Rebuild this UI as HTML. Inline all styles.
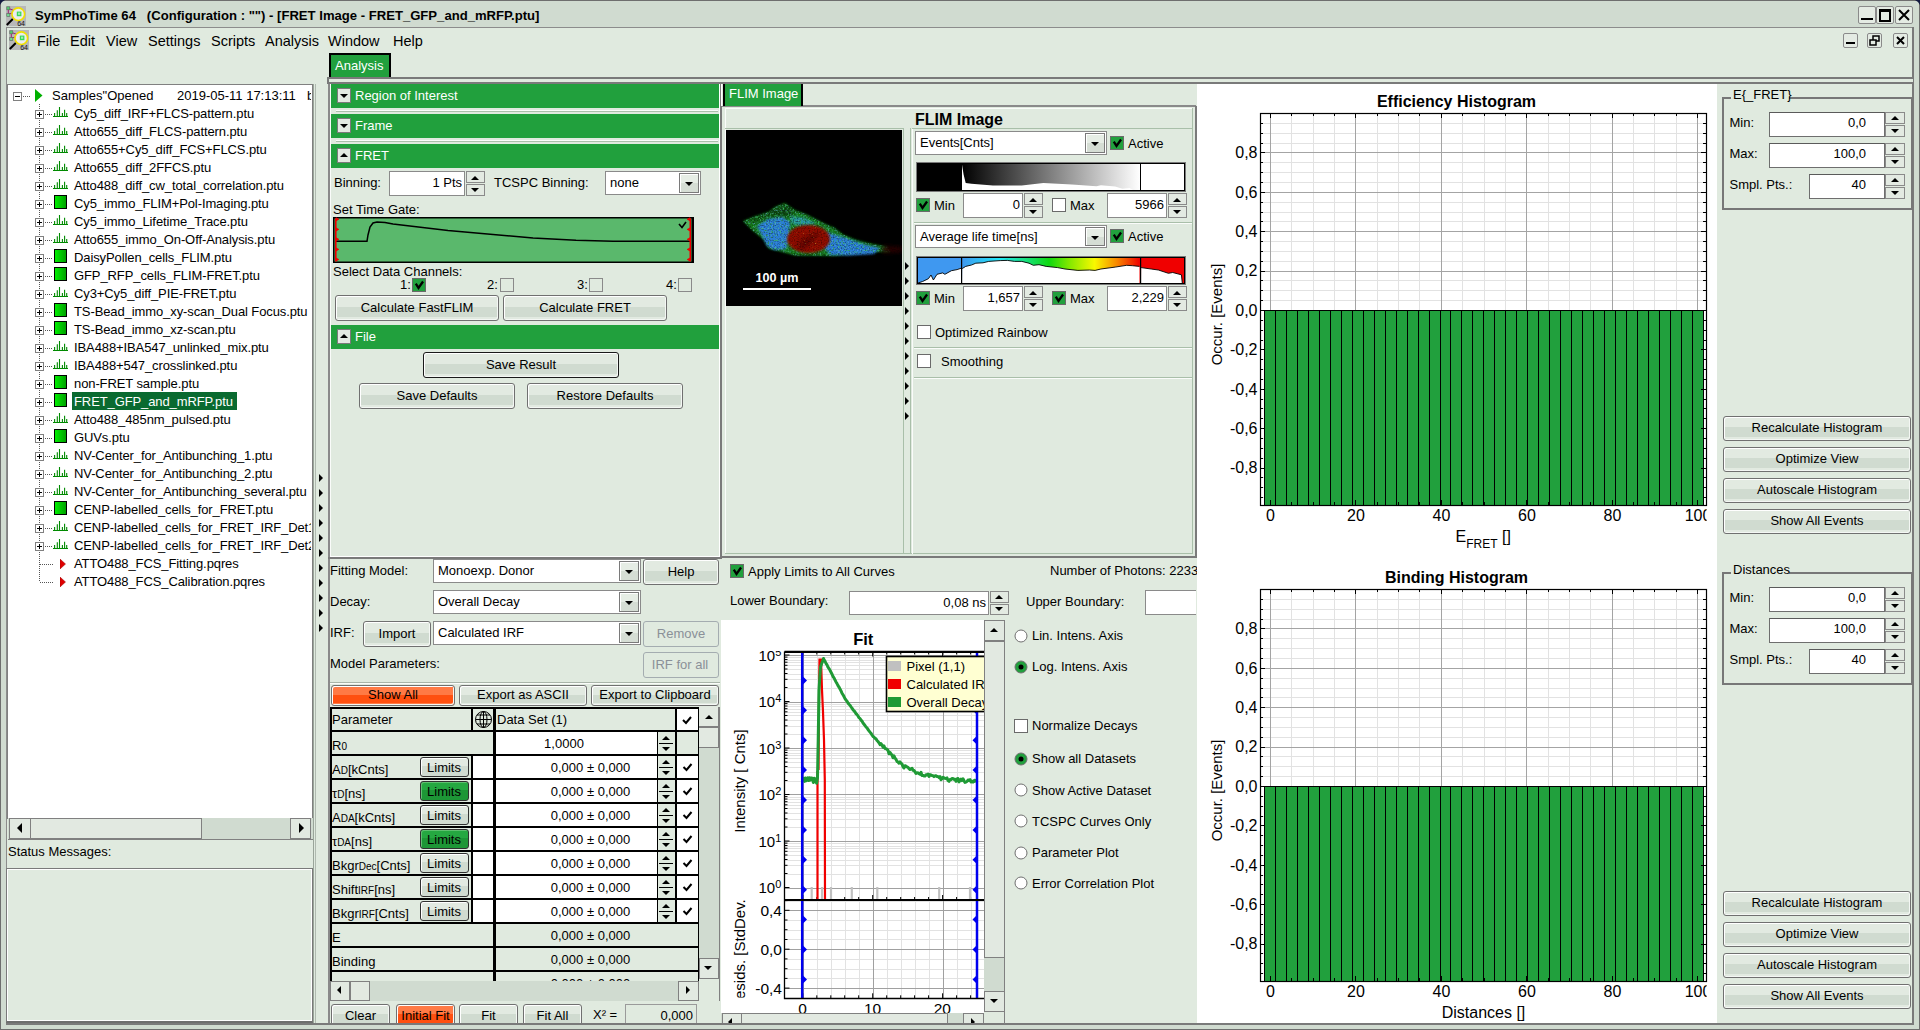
<!DOCTYPE html><html><head><meta charset="utf-8"><title>SymPhoTime 64</title><style>
html,body{margin:0;padding:0;}
body{width:1920px;height:1030px;position:relative;overflow:hidden;background:#e0eadf;font-family:"Liberation Sans",sans-serif;}
body div,body svg{position:absolute;}
.t{white-space:nowrap;line-height:normal;}
svg text{font-family:"Liberation Sans",sans-serif;}
</style></head><body>
<div style="left:0px;top:0px;width:1920px;height:1030px;background:#d0dbd0;"></div>
<div style="left:0px;top:0px;width:1920px;height:1px;background:#6e6e6e;"></div>
<div style="left:0px;top:0px;width:1px;height:1030px;background:#6e6e6e;"></div>
<div style="left:0px;top:1029px;width:1920px;height:1px;background:#6e6e6e;"></div>
<div style="left:1919px;top:0px;width:1px;height:1030px;background:#6e6e6e;"></div>
<svg style="left:0;top:0" width="6" height="6"><path d="M0 0 H5 Q1.5 1.5 0 5Z" fill="#141a40"/></svg>
<svg style="left:1914px;top:0" width="6" height="6"><path d="M6 0 H1 Q4.5 1.5 6 5Z" fill="#141a40"/></svg>
<div style="left:6px;top:27px;width:1908px;height:997px;background:#e0eadf;"></div>
<div style="left:6px;top:27px;width:1907px;height:1px;background:#8c8c8c;"></div>
<div style="left:6px;top:27px;width:1px;height:997px;background:#8c8c8c;"></div>
<div style="left:1912px;top:27px;width:2px;height:997px;background:#7a7a7a;"></div>
<div style="left:6px;top:1023px;width:1908px;height:1px;background:#7a7a7a;"></div>
<svg style="left:6px;top:6px" width="20" height="20" viewBox="0 0 20 20">
<rect x="0" y="0" width="20" height="20" fill="#b8b8b8"/>
<path d="M2.3 2.5 V8.5 M3.5 2.8 L8 4.5 M3.5 8 L6 7 M6 12 L11 9" stroke="#a02070" stroke-width="1" fill="none"/>
<rect x="0.8" y="0.8" width="3" height="3" fill="#50d070" stroke="#606060" stroke-width="0.6"/>
<rect x="0.8" y="7.6" width="3" height="3" fill="#70e090" stroke="#606060" stroke-width="0.6"/>
<line x1="0.8" y1="19" x2="6.8" y2="13" stroke="#000" stroke-width="2"/>
<circle cx="12.3" cy="8.2" r="6.3" fill="#ececec" stroke="#f0e000" stroke-width="1.6"/>
<rect x="10.8" y="5.6" width="4.6" height="4.6" fill="#38d858"/>
<rect x="12" y="6.6" width="2.2" height="2.2" fill="#a0f0b0"/>
<text x="11.2" y="19.6" font-size="7" font-family="Liberation Sans" fill="#111">64</text>
</svg>
<div class="t" style="top:7.64px;font-size:13.1px;color:#000;font-weight:bold;left:35px;white-space:pre;">SymPhoTime 64   (Configuration : &quot;&quot;) - [FRET Image - FRET_GFP_and_mRFP.ptu]</div>
<div style="left:1858px;top:6px;width:16px;height:16px;border:1px solid #8a8a8a;border-radius:2px;background:#e4ebe3"></div>
<div style="left:1861px;top:18px;width:12px;height:2px;background:#000;"></div>
<div style="left:1876px;top:6px;width:16px;height:16px;border:1px solid #8a8a8a;border-radius:2px;background:#e4ebe3"></div>
<div style="left:1879px;top:9px;width:8px;height:8px;border:2px solid #000;border-top-width:3px"></div>
<div style="left:1895px;top:6px;width:16px;height:16px;border:1px solid #8a8a8a;border-radius:2px;background:#e4ebe3"></div>
<svg style="left:1895px;top:6px" width="18" height="18"><path d="M4 4 L14 14 M14 4 L4 14" stroke="#000" stroke-width="2"/></svg>
<div style="left:1843px;top:33px;width:13px;height:13px;border:1px solid #8a8a8a;border-radius:2px;background:#e4ebe3"></div>
<div style="left:1846px;top:42px;width:9px;height:2px;background:#000;"></div>
<div style="left:1867px;top:33px;width:13px;height:13px;border:1px solid #8a8a8a;border-radius:2px;background:#e4ebe3"></div>
<svg style="left:1867px;top:33px" width="15" height="15"><rect x="6" y="3" width="6" height="5" fill="none" stroke="#000" stroke-width="1.5"/><rect x="3" y="7" width="6" height="5" fill="#e4ebe3" stroke="#000" stroke-width="1.5"/></svg>
<div style="left:1893px;top:33px;width:13px;height:13px;border:1px solid #8a8a8a;border-radius:2px;background:#e4ebe3"></div>
<svg style="left:1893px;top:33px" width="15" height="15"><path d="M4 4 L11 11 M11 4 L4 11" stroke="#000" stroke-width="2"/></svg>
<svg style="left:9px;top:30px" width="20" height="20" viewBox="0 0 20 20">
<rect x="0" y="0" width="20" height="20" fill="#b8b8b8"/>
<path d="M2.3 2.5 V8.5 M3.5 2.8 L8 4.5 M3.5 8 L6 7 M6 12 L11 9" stroke="#a02070" stroke-width="1" fill="none"/>
<rect x="0.8" y="0.8" width="3" height="3" fill="#50d070" stroke="#606060" stroke-width="0.6"/>
<rect x="0.8" y="7.6" width="3" height="3" fill="#70e090" stroke="#606060" stroke-width="0.6"/>
<line x1="0.8" y1="19" x2="6.8" y2="13" stroke="#000" stroke-width="2"/>
<circle cx="12.3" cy="8.2" r="6.3" fill="#ececec" stroke="#f0e000" stroke-width="1.6"/>
<rect x="10.8" y="5.6" width="4.6" height="4.6" fill="#38d858"/>
<rect x="12" y="6.6" width="2.2" height="2.2" fill="#a0f0b0"/>
<text x="11.2" y="19.6" font-size="7" font-family="Liberation Sans" fill="#111">64</text>
</svg>
<div class="t" style="top:32.88px;font-size:14.5px;color:#000;left:37px;">File</div>
<div class="t" style="top:32.88px;font-size:14.5px;color:#000;left:70px;">Edit</div>
<div class="t" style="top:32.88px;font-size:14.5px;color:#000;left:106px;">View</div>
<div class="t" style="top:32.88px;font-size:14.5px;color:#000;left:148px;">Settings</div>
<div class="t" style="top:32.88px;font-size:14.5px;color:#000;left:211px;">Scripts</div>
<div class="t" style="top:32.88px;font-size:14.5px;color:#000;left:265px;">Analysis</div>
<div class="t" style="top:32.88px;font-size:14.5px;color:#000;left:328px;">Window</div>
<div class="t" style="top:32.88px;font-size:14.5px;color:#000;left:393px;">Help</div>
<div style="left:329px;top:53px;width:58px;height:24px;border:2px solid #000;border-bottom:none;background:#21a03d"></div>
<div class="t" style="top:58.23px;font-size:13px;color:#fff;left:335px;">Analysis</div>
<div style="left:327px;top:77px;width:1586px;height:7px;background:#e0eadf;border-top:2px solid #7a7a7a;border-left:2px solid #7a7a7a;box-sizing:border-box;"></div>
<div style="left:327px;top:82px;width:1586px;height:2px;background:#7a7a7a;"></div>
<div style="left:329px;top:53px;width:58px;height:0px;"></div>
<div style="left:7px;top:84px;width:307px;height:735px;background:#fff;border:1px solid #808080;border-right:2px solid #808080;box-sizing:border-box;"></div>
<div style="left:8px;top:85px;width:303px;height:733px;overflow:hidden">
<div style="left:31px;top:19px;width:1px;height:478px;background:repeating-linear-gradient(180deg,#555 0 1px,transparent 1px 2px)"></div>
<div style="left:5px;top:7px;width:7px;height:7px;border:1px solid #808080;background:#fff"></div>
<div style="left:7px;top:11px;width:5px;height:1px;background:#000"></div>
<div style="left:15px;top:11px;width:8px;height:1px;background:repeating-linear-gradient(90deg,#555 0 1px,transparent 1px 2px)"></div>
<svg style="left:27px;top:4px" width="8" height="13"><path d="M0 0 L7.5 6.5 L0 13Z" fill="#00b000"/></svg>
<div class="t" style="left:44px;top:2.73px;font-size:13px;white-space:pre">Samples&quot;Opened</div>
<div class="t" style="left:169px;top:2.73px;font-size:13px;white-space:pre">2019-05-11 17:13:11</div>
<div class="t" style="left:299px;top:2.73px;font-size:13px;white-space:pre">b</div>
<div style="left:27px;top:25px;width:7px;height:7px;border:1px solid #808080;background:#fff"></div>
<div style="left:29px;top:29px;width:5px;height:1px;background:#000"></div>
<div style="left:31px;top:27px;width:1px;height:5px;background:#000"></div>
<div style="left:37px;top:29px;width:8px;height:1px;background:repeating-linear-gradient(90deg,#555 0 1px,transparent 1px 2px)"></div>
<svg style="left:45px;top:22px" width="16" height="11"><path d="M0 9.5 H15 M1.6 9.5 V6 M4.3 9.5 V3.3 M6.5 9.5 V0 M9.4 9.5 V6 M11.6 9.5 V2.7 M13.7 9.5 V6" stroke="#008a00" stroke-width="1.1" fill="none"/></svg>
<div class="t" style="left:66px;top:20.73px;font-size:13px;white-space:pre;letter-spacing:-0.1px">Cy5_diff_IRF+FLCS-pattern.ptu</div>
<div style="left:27px;top:43px;width:7px;height:7px;border:1px solid #808080;background:#fff"></div>
<div style="left:29px;top:47px;width:5px;height:1px;background:#000"></div>
<div style="left:31px;top:45px;width:1px;height:5px;background:#000"></div>
<div style="left:37px;top:47px;width:8px;height:1px;background:repeating-linear-gradient(90deg,#555 0 1px,transparent 1px 2px)"></div>
<svg style="left:45px;top:40px" width="16" height="11"><path d="M0 9.5 H15 M1.6 9.5 V6 M4.3 9.5 V3.3 M6.5 9.5 V0 M9.4 9.5 V6 M11.6 9.5 V2.7 M13.7 9.5 V6" stroke="#008a00" stroke-width="1.1" fill="none"/></svg>
<div class="t" style="left:66px;top:38.73px;font-size:13px;white-space:pre;letter-spacing:-0.1px">Atto655_diff_FLCS-pattern.ptu</div>
<div style="left:27px;top:61px;width:7px;height:7px;border:1px solid #808080;background:#fff"></div>
<div style="left:29px;top:65px;width:5px;height:1px;background:#000"></div>
<div style="left:31px;top:63px;width:1px;height:5px;background:#000"></div>
<div style="left:37px;top:65px;width:8px;height:1px;background:repeating-linear-gradient(90deg,#555 0 1px,transparent 1px 2px)"></div>
<svg style="left:45px;top:58px" width="16" height="11"><path d="M0 9.5 H15 M1.6 9.5 V6 M4.3 9.5 V3.3 M6.5 9.5 V0 M9.4 9.5 V6 M11.6 9.5 V2.7 M13.7 9.5 V6" stroke="#008a00" stroke-width="1.1" fill="none"/></svg>
<div class="t" style="left:66px;top:56.74px;font-size:13px;white-space:pre;letter-spacing:-0.1px">Atto655+Cy5_diff_FCS+FLCS.ptu</div>
<div style="left:27px;top:79px;width:7px;height:7px;border:1px solid #808080;background:#fff"></div>
<div style="left:29px;top:83px;width:5px;height:1px;background:#000"></div>
<div style="left:31px;top:81px;width:1px;height:5px;background:#000"></div>
<div style="left:37px;top:83px;width:8px;height:1px;background:repeating-linear-gradient(90deg,#555 0 1px,transparent 1px 2px)"></div>
<svg style="left:45px;top:76px" width="16" height="11"><path d="M0 9.5 H15 M1.6 9.5 V6 M4.3 9.5 V3.3 M6.5 9.5 V0 M9.4 9.5 V6 M11.6 9.5 V2.7 M13.7 9.5 V6" stroke="#008a00" stroke-width="1.1" fill="none"/></svg>
<div class="t" style="left:66px;top:74.74px;font-size:13px;white-space:pre;letter-spacing:-0.1px">Atto655_diff_2FFCS.ptu</div>
<div style="left:27px;top:97px;width:7px;height:7px;border:1px solid #808080;background:#fff"></div>
<div style="left:29px;top:101px;width:5px;height:1px;background:#000"></div>
<div style="left:31px;top:99px;width:1px;height:5px;background:#000"></div>
<div style="left:37px;top:101px;width:8px;height:1px;background:repeating-linear-gradient(90deg,#555 0 1px,transparent 1px 2px)"></div>
<svg style="left:45px;top:94px" width="16" height="11"><path d="M0 9.5 H15 M1.6 9.5 V6 M4.3 9.5 V3.3 M6.5 9.5 V0 M9.4 9.5 V6 M11.6 9.5 V2.7 M13.7 9.5 V6" stroke="#008a00" stroke-width="1.1" fill="none"/></svg>
<div class="t" style="left:66px;top:92.74px;font-size:13px;white-space:pre;letter-spacing:-0.1px">Atto488_diff_cw_total_correlation.ptu</div>
<div style="left:27px;top:115px;width:7px;height:7px;border:1px solid #808080;background:#fff"></div>
<div style="left:29px;top:119px;width:5px;height:1px;background:#000"></div>
<div style="left:31px;top:117px;width:1px;height:5px;background:#000"></div>
<div style="left:37px;top:119px;width:8px;height:1px;background:repeating-linear-gradient(90deg,#555 0 1px,transparent 1px 2px)"></div>
<div style="left:46px;top:110px;width:11px;height:12px;border:1px solid #000;background:linear-gradient(90deg,#00f000,#00a000)"></div>
<div class="t" style="left:66px;top:110.74px;font-size:13px;white-space:pre;letter-spacing:-0.1px">Cy5_immo_FLIM+Pol-Imaging.ptu</div>
<div style="left:27px;top:133px;width:7px;height:7px;border:1px solid #808080;background:#fff"></div>
<div style="left:29px;top:137px;width:5px;height:1px;background:#000"></div>
<div style="left:31px;top:135px;width:1px;height:5px;background:#000"></div>
<div style="left:37px;top:137px;width:8px;height:1px;background:repeating-linear-gradient(90deg,#555 0 1px,transparent 1px 2px)"></div>
<svg style="left:45px;top:130px" width="16" height="11"><path d="M0 9.5 H15 M1.6 9.5 V6 M4.3 9.5 V3.3 M6.5 9.5 V0 M9.4 9.5 V6 M11.6 9.5 V2.7 M13.7 9.5 V6" stroke="#008a00" stroke-width="1.1" fill="none"/></svg>
<div class="t" style="left:66px;top:128.74px;font-size:13px;white-space:pre;letter-spacing:-0.1px">Cy5_immo_Lifetime_Trace.ptu</div>
<div style="left:27px;top:151px;width:7px;height:7px;border:1px solid #808080;background:#fff"></div>
<div style="left:29px;top:155px;width:5px;height:1px;background:#000"></div>
<div style="left:31px;top:153px;width:1px;height:5px;background:#000"></div>
<div style="left:37px;top:155px;width:8px;height:1px;background:repeating-linear-gradient(90deg,#555 0 1px,transparent 1px 2px)"></div>
<svg style="left:45px;top:148px" width="16" height="11"><path d="M0 9.5 H15 M1.6 9.5 V6 M4.3 9.5 V3.3 M6.5 9.5 V0 M9.4 9.5 V6 M11.6 9.5 V2.7 M13.7 9.5 V6" stroke="#008a00" stroke-width="1.1" fill="none"/></svg>
<div class="t" style="left:66px;top:146.74px;font-size:13px;white-space:pre;letter-spacing:-0.1px">Atto655_immo_On-Off-Analysis.ptu</div>
<div style="left:27px;top:169px;width:7px;height:7px;border:1px solid #808080;background:#fff"></div>
<div style="left:29px;top:173px;width:5px;height:1px;background:#000"></div>
<div style="left:31px;top:171px;width:1px;height:5px;background:#000"></div>
<div style="left:37px;top:173px;width:8px;height:1px;background:repeating-linear-gradient(90deg,#555 0 1px,transparent 1px 2px)"></div>
<div style="left:46px;top:164px;width:11px;height:12px;border:1px solid #000;background:linear-gradient(90deg,#00f000,#00a000)"></div>
<div class="t" style="left:66px;top:164.74px;font-size:13px;white-space:pre;letter-spacing:-0.1px">DaisyPollen_cells_FLIM.ptu</div>
<div style="left:27px;top:187px;width:7px;height:7px;border:1px solid #808080;background:#fff"></div>
<div style="left:29px;top:191px;width:5px;height:1px;background:#000"></div>
<div style="left:31px;top:189px;width:1px;height:5px;background:#000"></div>
<div style="left:37px;top:191px;width:8px;height:1px;background:repeating-linear-gradient(90deg,#555 0 1px,transparent 1px 2px)"></div>
<div style="left:46px;top:182px;width:11px;height:12px;border:1px solid #000;background:linear-gradient(90deg,#00f000,#00a000)"></div>
<div class="t" style="left:66px;top:182.74px;font-size:13px;white-space:pre;letter-spacing:-0.1px">GFP_RFP_cells_FLIM-FRET.ptu</div>
<div style="left:27px;top:205px;width:7px;height:7px;border:1px solid #808080;background:#fff"></div>
<div style="left:29px;top:209px;width:5px;height:1px;background:#000"></div>
<div style="left:31px;top:207px;width:1px;height:5px;background:#000"></div>
<div style="left:37px;top:209px;width:8px;height:1px;background:repeating-linear-gradient(90deg,#555 0 1px,transparent 1px 2px)"></div>
<svg style="left:45px;top:202px" width="16" height="11"><path d="M0 9.5 H15 M1.6 9.5 V6 M4.3 9.5 V3.3 M6.5 9.5 V0 M9.4 9.5 V6 M11.6 9.5 V2.7 M13.7 9.5 V6" stroke="#008a00" stroke-width="1.1" fill="none"/></svg>
<div class="t" style="left:66px;top:200.74px;font-size:13px;white-space:pre;letter-spacing:-0.1px">Cy3+Cy5_diff_PIE-FRET.ptu</div>
<div style="left:27px;top:223px;width:7px;height:7px;border:1px solid #808080;background:#fff"></div>
<div style="left:29px;top:227px;width:5px;height:1px;background:#000"></div>
<div style="left:31px;top:225px;width:1px;height:5px;background:#000"></div>
<div style="left:37px;top:227px;width:8px;height:1px;background:repeating-linear-gradient(90deg,#555 0 1px,transparent 1px 2px)"></div>
<div style="left:46px;top:218px;width:11px;height:12px;border:1px solid #000;background:linear-gradient(90deg,#00f000,#00a000)"></div>
<div class="t" style="left:66px;top:218.74px;font-size:13px;white-space:pre;letter-spacing:-0.1px">TS-Bead_immo_xy-scan_Dual Focus.ptu</div>
<div style="left:27px;top:241px;width:7px;height:7px;border:1px solid #808080;background:#fff"></div>
<div style="left:29px;top:245px;width:5px;height:1px;background:#000"></div>
<div style="left:31px;top:243px;width:1px;height:5px;background:#000"></div>
<div style="left:37px;top:245px;width:8px;height:1px;background:repeating-linear-gradient(90deg,#555 0 1px,transparent 1px 2px)"></div>
<div style="left:46px;top:236px;width:11px;height:12px;border:1px solid #000;background:linear-gradient(90deg,#00f000,#00a000)"></div>
<div class="t" style="left:66px;top:236.74px;font-size:13px;white-space:pre;letter-spacing:-0.1px">TS-Bead_immo_xz-scan.ptu</div>
<div style="left:27px;top:259px;width:7px;height:7px;border:1px solid #808080;background:#fff"></div>
<div style="left:29px;top:263px;width:5px;height:1px;background:#000"></div>
<div style="left:31px;top:261px;width:1px;height:5px;background:#000"></div>
<div style="left:37px;top:263px;width:8px;height:1px;background:repeating-linear-gradient(90deg,#555 0 1px,transparent 1px 2px)"></div>
<svg style="left:45px;top:256px" width="16" height="11"><path d="M0 9.5 H15 M1.6 9.5 V6 M4.3 9.5 V3.3 M6.5 9.5 V0 M9.4 9.5 V6 M11.6 9.5 V2.7 M13.7 9.5 V6" stroke="#008a00" stroke-width="1.1" fill="none"/></svg>
<div class="t" style="left:66px;top:254.74px;font-size:13px;white-space:pre;letter-spacing:-0.1px">IBA488+IBA547_unlinked_mix.ptu</div>
<div style="left:27px;top:277px;width:7px;height:7px;border:1px solid #808080;background:#fff"></div>
<div style="left:29px;top:281px;width:5px;height:1px;background:#000"></div>
<div style="left:31px;top:279px;width:1px;height:5px;background:#000"></div>
<div style="left:37px;top:281px;width:8px;height:1px;background:repeating-linear-gradient(90deg,#555 0 1px,transparent 1px 2px)"></div>
<svg style="left:45px;top:274px" width="16" height="11"><path d="M0 9.5 H15 M1.6 9.5 V6 M4.3 9.5 V3.3 M6.5 9.5 V0 M9.4 9.5 V6 M11.6 9.5 V2.7 M13.7 9.5 V6" stroke="#008a00" stroke-width="1.1" fill="none"/></svg>
<div class="t" style="left:66px;top:272.74px;font-size:13px;white-space:pre;letter-spacing:-0.1px">IBA488+547_crosslinked.ptu</div>
<div style="left:27px;top:295px;width:7px;height:7px;border:1px solid #808080;background:#fff"></div>
<div style="left:29px;top:299px;width:5px;height:1px;background:#000"></div>
<div style="left:31px;top:297px;width:1px;height:5px;background:#000"></div>
<div style="left:37px;top:299px;width:8px;height:1px;background:repeating-linear-gradient(90deg,#555 0 1px,transparent 1px 2px)"></div>
<div style="left:46px;top:290px;width:11px;height:12px;border:1px solid #000;background:linear-gradient(90deg,#00f000,#00a000)"></div>
<div class="t" style="left:66px;top:290.74px;font-size:13px;white-space:pre;letter-spacing:-0.1px">non-FRET sample.ptu</div>
<div style="left:27px;top:313px;width:7px;height:7px;border:1px solid #808080;background:#fff"></div>
<div style="left:29px;top:317px;width:5px;height:1px;background:#000"></div>
<div style="left:31px;top:315px;width:1px;height:5px;background:#000"></div>
<div style="left:37px;top:317px;width:8px;height:1px;background:repeating-linear-gradient(90deg,#555 0 1px,transparent 1px 2px)"></div>
<div style="left:46px;top:308px;width:11px;height:12px;border:1px solid #000;background:linear-gradient(90deg,#00f000,#00a000)"></div>
<div style="left:64px;top:307px;width:165px;height:18px;background:#0a6a30"></div>
<div class="t" style="left:66px;top:308.74px;font-size:13px;color:#fff;letter-spacing:-0.1px">FRET_GFP_and_mRFP.ptu</div>
<div style="left:27px;top:331px;width:7px;height:7px;border:1px solid #808080;background:#fff"></div>
<div style="left:29px;top:335px;width:5px;height:1px;background:#000"></div>
<div style="left:31px;top:333px;width:1px;height:5px;background:#000"></div>
<div style="left:37px;top:335px;width:8px;height:1px;background:repeating-linear-gradient(90deg,#555 0 1px,transparent 1px 2px)"></div>
<svg style="left:45px;top:328px" width="16" height="11"><path d="M0 9.5 H15 M1.6 9.5 V6 M4.3 9.5 V3.3 M6.5 9.5 V0 M9.4 9.5 V6 M11.6 9.5 V2.7 M13.7 9.5 V6" stroke="#008a00" stroke-width="1.1" fill="none"/></svg>
<div class="t" style="left:66px;top:326.74px;font-size:13px;white-space:pre;letter-spacing:-0.1px">Atto488_485nm_pulsed.ptu</div>
<div style="left:27px;top:349px;width:7px;height:7px;border:1px solid #808080;background:#fff"></div>
<div style="left:29px;top:353px;width:5px;height:1px;background:#000"></div>
<div style="left:31px;top:351px;width:1px;height:5px;background:#000"></div>
<div style="left:37px;top:353px;width:8px;height:1px;background:repeating-linear-gradient(90deg,#555 0 1px,transparent 1px 2px)"></div>
<div style="left:46px;top:344px;width:11px;height:12px;border:1px solid #000;background:linear-gradient(90deg,#00f000,#00a000)"></div>
<div class="t" style="left:66px;top:344.74px;font-size:13px;white-space:pre;letter-spacing:-0.1px">GUVs.ptu</div>
<div style="left:27px;top:367px;width:7px;height:7px;border:1px solid #808080;background:#fff"></div>
<div style="left:29px;top:371px;width:5px;height:1px;background:#000"></div>
<div style="left:31px;top:369px;width:1px;height:5px;background:#000"></div>
<div style="left:37px;top:371px;width:8px;height:1px;background:repeating-linear-gradient(90deg,#555 0 1px,transparent 1px 2px)"></div>
<svg style="left:45px;top:364px" width="16" height="11"><path d="M0 9.5 H15 M1.6 9.5 V6 M4.3 9.5 V3.3 M6.5 9.5 V0 M9.4 9.5 V6 M11.6 9.5 V2.7 M13.7 9.5 V6" stroke="#008a00" stroke-width="1.1" fill="none"/></svg>
<div class="t" style="left:66px;top:362.74px;font-size:13px;white-space:pre;letter-spacing:-0.1px">NV-Center_for_Antibunching_1.ptu</div>
<div style="left:27px;top:385px;width:7px;height:7px;border:1px solid #808080;background:#fff"></div>
<div style="left:29px;top:389px;width:5px;height:1px;background:#000"></div>
<div style="left:31px;top:387px;width:1px;height:5px;background:#000"></div>
<div style="left:37px;top:389px;width:8px;height:1px;background:repeating-linear-gradient(90deg,#555 0 1px,transparent 1px 2px)"></div>
<svg style="left:45px;top:382px" width="16" height="11"><path d="M0 9.5 H15 M1.6 9.5 V6 M4.3 9.5 V3.3 M6.5 9.5 V0 M9.4 9.5 V6 M11.6 9.5 V2.7 M13.7 9.5 V6" stroke="#008a00" stroke-width="1.1" fill="none"/></svg>
<div class="t" style="left:66px;top:380.74px;font-size:13px;white-space:pre;letter-spacing:-0.1px">NV-Center_for_Antibunching_2.ptu</div>
<div style="left:27px;top:403px;width:7px;height:7px;border:1px solid #808080;background:#fff"></div>
<div style="left:29px;top:407px;width:5px;height:1px;background:#000"></div>
<div style="left:31px;top:405px;width:1px;height:5px;background:#000"></div>
<div style="left:37px;top:407px;width:8px;height:1px;background:repeating-linear-gradient(90deg,#555 0 1px,transparent 1px 2px)"></div>
<svg style="left:45px;top:400px" width="16" height="11"><path d="M0 9.5 H15 M1.6 9.5 V6 M4.3 9.5 V3.3 M6.5 9.5 V0 M9.4 9.5 V6 M11.6 9.5 V2.7 M13.7 9.5 V6" stroke="#008a00" stroke-width="1.1" fill="none"/></svg>
<div class="t" style="left:66px;top:398.74px;font-size:13px;white-space:pre;letter-spacing:-0.1px">NV-Center_for_Antibunching_several.ptu</div>
<div style="left:27px;top:421px;width:7px;height:7px;border:1px solid #808080;background:#fff"></div>
<div style="left:29px;top:425px;width:5px;height:1px;background:#000"></div>
<div style="left:31px;top:423px;width:1px;height:5px;background:#000"></div>
<div style="left:37px;top:425px;width:8px;height:1px;background:repeating-linear-gradient(90deg,#555 0 1px,transparent 1px 2px)"></div>
<div style="left:46px;top:416px;width:11px;height:12px;border:1px solid #000;background:linear-gradient(90deg,#00f000,#00a000)"></div>
<div class="t" style="left:66px;top:416.74px;font-size:13px;white-space:pre;letter-spacing:-0.1px">CENP-labelled_cells_for_FRET.ptu</div>
<div style="left:27px;top:439px;width:7px;height:7px;border:1px solid #808080;background:#fff"></div>
<div style="left:29px;top:443px;width:5px;height:1px;background:#000"></div>
<div style="left:31px;top:441px;width:1px;height:5px;background:#000"></div>
<div style="left:37px;top:443px;width:8px;height:1px;background:repeating-linear-gradient(90deg,#555 0 1px,transparent 1px 2px)"></div>
<svg style="left:45px;top:436px" width="16" height="11"><path d="M0 9.5 H15 M1.6 9.5 V6 M4.3 9.5 V3.3 M6.5 9.5 V0 M9.4 9.5 V6 M11.6 9.5 V2.7 M13.7 9.5 V6" stroke="#008a00" stroke-width="1.1" fill="none"/></svg>
<div class="t" style="left:66px;top:434.74px;font-size:13px;white-space:pre;letter-spacing:-0.1px">CENP-labelled_cells_for_FRET_IRF_Det1</div>
<div style="left:27px;top:457px;width:7px;height:7px;border:1px solid #808080;background:#fff"></div>
<div style="left:29px;top:461px;width:5px;height:1px;background:#000"></div>
<div style="left:31px;top:459px;width:1px;height:5px;background:#000"></div>
<div style="left:37px;top:461px;width:8px;height:1px;background:repeating-linear-gradient(90deg,#555 0 1px,transparent 1px 2px)"></div>
<svg style="left:45px;top:454px" width="16" height="11"><path d="M0 9.5 H15 M1.6 9.5 V6 M4.3 9.5 V3.3 M6.5 9.5 V0 M9.4 9.5 V6 M11.6 9.5 V2.7 M13.7 9.5 V6" stroke="#008a00" stroke-width="1.1" fill="none"/></svg>
<div class="t" style="left:66px;top:452.74px;font-size:13px;white-space:pre;letter-spacing:-0.1px">CENP-labelled_cells_for_FRET_IRF_Det2</div>
<div style="left:32px;top:479px;width:13px;height:1px;background:repeating-linear-gradient(90deg,#555 0 1px,transparent 1px 2px)"></div>
<svg style="left:52px;top:474px" width="6" height="10"><path d="M0 0 L5.5 5 L0 10Z" fill="#e00000" stroke="#900" stroke-width="0.5"/></svg>
<div class="t" style="left:66px;top:470.74px;font-size:13px;letter-spacing:-0.1px">ATTO488_FCS_Fitting.pqres</div>
<div style="left:32px;top:497px;width:13px;height:1px;background:repeating-linear-gradient(90deg,#555 0 1px,transparent 1px 2px)"></div>
<svg style="left:52px;top:492px" width="6" height="10"><path d="M0 0 L5.5 5 L0 10Z" fill="#e00000" stroke="#900" stroke-width="0.5"/></svg>
<div class="t" style="left:66px;top:488.74px;font-size:13px;letter-spacing:-0.1px">ATTO488_FCS_Calibration.pqres</div>
</div>
<div style="left:8px;top:818px;width:305px;height:21px;background:#d0dbd0;"></div>
<div style="left:9px;top:818px;width:20px;height:19px;border:1px solid #808080;background:#e2e9e1"></div>
<div style="left:16.5px;top:823px;width:0;height:0;border-top:5px solid transparent;border-bottom:5px solid transparent;border-right:5px solid #000"></div>
<div style="left:30px;top:818px;width:170px;height:19px;border:1px solid #808080;background:#e2e9e1"></div>
<div style="left:290px;top:818px;width:19px;height:19px;border:1px solid #808080;background:#e2e9e1"></div>
<div style="left:298.5px;top:823px;width:0;height:0;border-top:5px solid transparent;border-bottom:5px solid transparent;border-left:5px solid #000"></div>
<div style="left:8px;top:839px;width:305px;height:1px;background:#808080;"></div>
<div class="t" style="top:844.24px;font-size:13px;color:#000;left:8px;">Status Messages:</div>
<div style="left:6px;top:868px;width:305px;height:152px;border:1px solid #7a7a7a;border-bottom:2px solid #6e6e6e;background:#e0eadf;box-shadow:inset 1px 1px 0 #fff,inset -1px -1px 0 #fff"></div>
<div style="left:313px;top:84px;width:1px;height:940px;background:#9aa59a;"></div>
<div style="left:315px;top:84px;width:1px;height:940px;background:#b0bab0;"></div>
<div style="left:328px;top:84px;width:2px;height:474px;background:#8a8a8a;"></div>
<div style="left:330px;top:84px;width:1px;height:474px;background:#fafcfa;"></div>
<div style="left:330px;top:556px;width:391px;height:1px;background:#fff;"></div>
<div style="left:328px;top:557px;width:394px;height:2px;background:#7a7a7a;"></div>
<div style="left:719px;top:84px;width:1px;height:473px;background:#fff;"></div>
<div style="left:720px;top:84px;width:2px;height:474px;background:#7a7a7a;"></div>
<div style="left:331px;top:84px;width:388px;height:24px;background:#21a03d;"></div>
<div style="left:337px;top:88px;width:12px;height:13px;border:1px solid #7a7a7a;background:#e3eae2"></div>
<div style="left:339.5px;top:93.5px;width:0;height:0;border-left:4px solid transparent;border-right:4px solid transparent;border-top:4px solid #000"></div>
<div class="t" style="top:88.23px;font-size:13px;color:#fff;left:355px;">Region of Interest</div>
<div style="left:336px;top:110px;width:382px;height:1px;background:#fafcfa;"></div>
<div style="left:336px;top:111px;width:382px;height:1px;background:#a9bfa9;"></div>
<div style="left:331px;top:114px;width:388px;height:24px;background:#21a03d;"></div>
<div style="left:337px;top:118px;width:12px;height:13px;border:1px solid #7a7a7a;background:#e3eae2"></div>
<div style="left:339.5px;top:123.5px;width:0;height:0;border-left:4px solid transparent;border-right:4px solid transparent;border-top:4px solid #000"></div>
<div class="t" style="top:118.23px;font-size:13px;color:#fff;left:355px;">Frame</div>
<div style="left:336px;top:140px;width:382px;height:1px;background:#fafcfa;"></div>
<div style="left:336px;top:141px;width:382px;height:1px;background:#a9bfa9;"></div>
<div style="left:331px;top:144px;width:388px;height:24px;background:#21a03d;"></div>
<div style="left:337px;top:148px;width:12px;height:13px;border:1px solid #7a7a7a;background:#e3eae2"></div>
<div style="left:339.5px;top:153.0px;width:0;height:0;border-left:4px solid transparent;border-right:4px solid transparent;border-bottom:4px solid #000"></div>
<div class="t" style="top:148.24px;font-size:13px;color:#fff;left:355px;">FRET</div>
<div class="t" style="top:175.24px;font-size:13px;color:#000;left:334px;">Binning:</div>
<div style="left:389px;top:171px;width:74px;height:23px;border:1px solid #8a8a8a;background:#fff"></div>
<div class="t" style="top:175.24px;font-size:13px;color:#000;left:-338px;width:800px;text-align:right;">1 Pts</div>
<div style="left:466px;top:171.0px;width:17px;height:10.0px;border:1px solid #8a8a8a;background:#e3eae2"></div>
<div style="left:466px;top:184.0px;width:17px;height:10.0px;border:1px solid #8a8a8a;background:#e3eae2"></div>
<div style="left:471.0px;top:175.5px;width:0;height:0;border-left:4px solid transparent;border-right:4px solid transparent;border-bottom:4px solid #000"></div>
<div style="left:471.0px;top:188.0px;width:0;height:0;border-left:4px solid transparent;border-right:4px solid transparent;border-top:4px solid #000"></div>
<div class="t" style="top:175.24px;font-size:13px;color:#000;left:494px;">TCSPC Binning:</div>
<div style="left:605px;top:171px;width:94px;height:22px;border:1px solid #8a8a8a;background:#fff"></div>
<div style="left:679px;top:173px;width:18px;height:18px;border:1px solid #7a7a7a;background:linear-gradient(#e6ede5 0,#e6ede5 50%,#d5ddd4 50%);box-shadow:inset 1px 1px 0 #fff"></div>
<div style="left:685px;top:182.0px;width:0;height:0;border-left:4px solid transparent;border-right:4px solid transparent;border-top:4px solid #000"></div>
<div class="t" style="top:175.24px;font-size:13px;color:#000;left:610px;">none</div>
<div class="t" style="top:202.24px;font-size:13px;color:#000;left:333px;">Set Time Gate:</div>
<svg style="left:333px;top:217px" width="361" height="46" viewBox="0 0 361 46">
<rect x="0.75" y="0.75" width="359.5" height="44.5" fill="#5ab86c" stroke="#000" stroke-width="1.5"/>
<path d="M2 24.3 L34 24.3 L35 18 L37 10 L40 6 L44 5 L52 5.5 L60 7 L115 13.5 L200 21 L243 23.3 L280 24.3 L358 24.3" stroke="#000" stroke-width="1.5" fill="none"/>
<path d="M2.8 1.5 V44.5 M357.3 1.5 V44.5" stroke="#f00000" stroke-width="1.6"/>
<path d="M3 0.8 l2.8 1.5 l-2.8 1.5Z M3 10.9 l2.8 1.5 l-2.8 1.5Z M3 20.8 l2.8 1.5 l-2.8 1.5Z M3 30.9 l2.8 1.5 l-2.8 1.5Z M3 41 l2.8 1.5 l-2.8 1.5Z M357 0.8 l-2.8 1.5 l2.8 1.5Z M357 10.9 l-2.8 1.5 l2.8 1.5Z M357 20.8 l-2.8 1.5 l2.8 1.5Z M357 30.9 l-2.8 1.5 l2.8 1.5Z M357 41 l-2.8 1.5 l2.8 1.5Z" fill="#f00000" stroke="#f00000" stroke-width="0.8"/>
<rect x="358.5" y="1" width="2" height="44" fill="#000"/>
<path d="M346 7 L349 10.5 L353 5" stroke="#000" stroke-width="1.6" fill="none"/>
</svg>
<div class="t" style="top:264.24px;font-size:13px;color:#000;left:333px;">Select Data Channels:</div>
<div class="t" style="top:277.24px;font-size:13px;color:#000;left:400px;">1:</div>
<div style="left:412px;top:278px;width:12px;height:12px;border:1px solid #6a6a6a;background:#21a03d"></div>
<svg style="left:412px;top:278px" width="14" height="14"><path d="M4.4 6.6 L6.5 9.9 L10.4 4.4" stroke="#000" stroke-width="2.3" fill="none" stroke-linecap="square"/></svg>
<div class="t" style="top:277.24px;font-size:13px;color:#000;left:487px;">2:</div>
<div style="left:500px;top:278px;width:12px;height:12px;border:1px solid #8a8a8a;background:#e0eadf"></div>
<div class="t" style="top:277.24px;font-size:13px;color:#000;left:577px;">3:</div>
<div style="left:589px;top:278px;width:12px;height:12px;border:1px solid #8a8a8a;background:#e0eadf"></div>
<div class="t" style="top:277.24px;font-size:13px;color:#000;left:666px;">4:</div>
<div style="left:678px;top:278px;width:12px;height:12px;border:1px solid #8a8a8a;background:#e0eadf"></div>
<div style="left:335px;top:295px;width:162px;height:24px;border:1px solid #707070;border-radius:3px;background:linear-gradient(#e2eae1 0,#e2eae1 45%,#d0dbd0 45%,#d0dbd0 88%,#e2eae1 88%);box-shadow:inset 1px 1px 0 #fff,inset -1px -1px 0 #f4f7f4"></div>
<div class="t" style="top:299.74px;font-size:13px;color:#000;left:17.0px;width:800px;text-align:center;">Calculate FastFLIM</div>
<div style="left:503px;top:295px;width:162px;height:24px;border:1px solid #707070;border-radius:3px;background:linear-gradient(#e2eae1 0,#e2eae1 45%,#d0dbd0 45%,#d0dbd0 88%,#e2eae1 88%);box-shadow:inset 1px 1px 0 #fff,inset -1px -1px 0 #f4f7f4"></div>
<div class="t" style="top:299.74px;font-size:13px;color:#000;left:185.0px;width:800px;text-align:center;">Calculate FRET</div>
<div style="left:331px;top:325px;width:388px;height:24px;background:#21a03d;"></div>
<div style="left:337px;top:329px;width:12px;height:13px;border:1px solid #7a7a7a;background:#e3eae2"></div>
<div style="left:339.5px;top:334.0px;width:0;height:0;border-left:4px solid transparent;border-right:4px solid transparent;border-bottom:4px solid #000"></div>
<div class="t" style="top:329.24px;font-size:13px;color:#fff;left:355px;">File</div>
<div style="left:423px;top:352px;width:194px;height:24px;border:1px solid #1a1a1a;border-radius:3px;background:linear-gradient(#e2eae1 0,#e2eae1 45%,#d0dbd0 45%,#d0dbd0 88%,#e2eae1 88%);box-shadow:inset 1px 1px 0 #fff,inset -1px -1px 0 #f4f7f4"></div>
<div class="t" style="top:356.74px;font-size:13px;color:#000;left:121.0px;width:800px;text-align:center;">Save Result</div>
<div style="left:359px;top:383px;width:154px;height:24px;border:1px solid #707070;border-radius:3px;background:linear-gradient(#e2eae1 0,#e2eae1 45%,#d0dbd0 45%,#d0dbd0 88%,#e2eae1 88%);box-shadow:inset 1px 1px 0 #fff,inset -1px -1px 0 #f4f7f4"></div>
<div class="t" style="top:387.74px;font-size:13px;color:#000;left:37.0px;width:800px;text-align:center;">Save Defaults</div>
<div style="left:527px;top:383px;width:154px;height:24px;border:1px solid #707070;border-radius:3px;background:linear-gradient(#e2eae1 0,#e2eae1 45%,#d0dbd0 45%,#d0dbd0 88%,#e2eae1 88%);box-shadow:inset 1px 1px 0 #fff,inset -1px -1px 0 #f4f7f4"></div>
<div class="t" style="top:387.74px;font-size:13px;color:#000;left:205.0px;width:800px;text-align:center;">Restore Defaults</div>
<div style="left:319.0px;top:474px;width:0;height:0;border-top:4px solid transparent;border-bottom:4px solid transparent;border-left:4px solid #000"></div>
<div style="left:319.0px;top:489px;width:0;height:0;border-top:4px solid transparent;border-bottom:4px solid transparent;border-left:4px solid #000"></div>
<div style="left:319.0px;top:504px;width:0;height:0;border-top:4px solid transparent;border-bottom:4px solid transparent;border-left:4px solid #000"></div>
<div style="left:319.0px;top:519px;width:0;height:0;border-top:4px solid transparent;border-bottom:4px solid transparent;border-left:4px solid #000"></div>
<div style="left:319.0px;top:534px;width:0;height:0;border-top:4px solid transparent;border-bottom:4px solid transparent;border-left:4px solid #000"></div>
<div style="left:319.0px;top:549px;width:0;height:0;border-top:4px solid transparent;border-bottom:4px solid transparent;border-left:4px solid #000"></div>
<div style="left:319.0px;top:564px;width:0;height:0;border-top:4px solid transparent;border-bottom:4px solid transparent;border-left:4px solid #000"></div>
<div style="left:319.0px;top:579px;width:0;height:0;border-top:4px solid transparent;border-bottom:4px solid transparent;border-left:4px solid #000"></div>
<div style="left:319.0px;top:594px;width:0;height:0;border-top:4px solid transparent;border-bottom:4px solid transparent;border-left:4px solid #000"></div>
<div style="left:319.0px;top:609px;width:0;height:0;border-top:4px solid transparent;border-bottom:4px solid transparent;border-left:4px solid #000"></div>
<div style="left:319.0px;top:624px;width:0;height:0;border-top:4px solid transparent;border-bottom:4px solid transparent;border-left:4px solid #000"></div>
<div style="left:723px;top:84px;width:80px;height:22px;background:#21a03d;border-left:2px solid #000;border-right:2px solid #000;box-sizing:border-box;"></div>
<div style="left:721px;top:84px;width:1px;height:22px;background:#fff;"></div>
<div class="t" style="top:86.23px;font-size:13px;color:#fff;left:729px;">FLIM Image</div>
<div style="left:722px;top:106px;width:474px;height:1px;background:#8a8a8a;"></div>
<div style="left:803px;top:105px;width:393px;height:1px;background:#8a8a8a;"></div>
<div style="left:1195px;top:106px;width:2px;height:452px;background:#7a7a7a;"></div>
<div style="left:722px;top:556px;width:475px;height:2px;background:#7a7a7a;"></div>
<div style="left:723px;top:107px;width:472px;height:449px;background:#e0eadf;"></div>
<div style="left:725px;top:108px;width:468px;height:1px;background:#fafcfa;"></div>
<div style="left:725px;top:108px;width:1px;height:446px;background:#fafcfa;"></div>
<div style="left:725px;top:553px;width:468px;height:1px;background:#a9bfa9;"></div>
<div style="left:1192px;top:108px;width:1px;height:446px;background:#a9bfa9;"></div>
<div style="left:725px;top:128px;width:179px;height:1px;background:#a9bfa9;"></div>
<div style="left:903px;top:128px;width:1px;height:426px;background:#a9bfa9;"></div>
<div style="left:910px;top:128px;width:1px;height:426px;background:#a9bfa9;"></div>
<div style="left:912px;top:128px;width:1px;height:426px;background:#fafcfa;"></div>
<div style="left:912px;top:128px;width:281px;height:1px;background:#a9bfa9;"></div>
<svg style="left:726px;top:130px" width="176" height="176" viewBox="726 130 176 176">
<defs>
<filter id="bl3" x="-20%" y="-50%" width="140%" height="200%"><feGaussianBlur stdDeviation="2"/></filter>
<filter id="bl2" x="-20%" y="-50%" width="140%" height="200%"><feGaussianBlur stdDeviation="1.2"/></filter>
<filter id="bl1" x="-20%" y="-50%" width="140%" height="200%"><feGaussianBlur stdDeviation="0.8"/></filter>
<filter id="nz" x="0" y="0" width="100%" height="100%"><feTurbulence type="fractalNoise" baseFrequency="0.75" numOctaves="1" seed="3"/><feColorMatrix values="0 0 0 0 0  0 0 0 0 0  0 0 0 0 0  0 0 0 -3 1.6"/><feComposite in2="SourceGraphic" operator="in"/></filter>
<filter id="nzg" x="0" y="0" width="100%" height="100%"><feTurbulence type="fractalNoise" baseFrequency="0.6" numOctaves="1" seed="11"/><feColorMatrix values="0 0 0 0 0.05  0 0 0 0 0.55  0 0 0 0 0.12  0 0 0 4 -2.1"/><feComposite in2="SourceGraphic" operator="in"/></filter>
<filter id="nzb" x="0" y="0" width="100%" height="100%"><feTurbulence type="fractalNoise" baseFrequency="0.6" numOctaves="1" seed="5"/><feColorMatrix values="0 0 0 0 0.15  0 0 0 0 0.45  0 0 0 0 0.9  0 0 0 4 -2.2"/><feComposite in2="SourceGraphic" operator="in"/></filter>
<filter id="nzy" x="0" y="0" width="100%" height="100%"><feTurbulence type="fractalNoise" baseFrequency="0.9" numOctaves="1" seed="21"/><feColorMatrix values="0 0 0 0 0.75  0 0 0 0 0.6  0 0 0 0 0.05  0 0 0 6 -4.1"/><feComposite in2="SourceGraphic" operator="in"/></filter>
<clipPath id="cellc"><path d="M743 221 L755.5 216 L768.6 211.7 L775.6 206.5 L785 203 L795 210 L808 215 L816.7 219.6 L825.5 224 L834 227.5 L843 234.5 L856 239.7 L869 243.2 L878 245 L886.7 246.7 L890 252 L869 252 L834 256 L795 255.5 L774.7 250 L768.6 248.5 L764 240 L752 230Z"/></clipPath>
<clipPath id="nucc"><ellipse cx="808.5" cy="239" rx="21.5" ry="14"/></clipPath>
</defs>
<rect x="726" y="130" width="176" height="176" fill="#000"/>
<path d="M743 221 L755.5 216 L768.6 211.7 L775.6 206.5 L785 203 L795 210 L808 215 L816.7 219.6 L825.5 224 L834 227.5 L843 234.5 L856 239.7 L869 243.2 L878 245 L886.7 246.7 L890 252 L869 252 L834 256 L795 255.5 L774.7 250 L768.6 248.5 L764 240 L752 230Z" fill="#137a1c" filter="url(#bl2)"/>
<path d="M745 222 L760 216 L776 208 L786 205 L796 212 L790 216 L770 216 L755 222Z" fill="#000" filter="url(#bl3)" opacity="0.45"/>
<path d="M757 226 L768 219 L782 217 L790 222 L789 238 L786 249 L774 250 L767 246 L762 236Z" fill="#2c7ed8" filter="url(#bl2)"/>
<path d="M790 216 L804 218 L816 223 L806 226 L792 224Z" fill="#2aa0c8" filter="url(#bl2)" opacity="0.75"/>
<path d="M826 232 L846 238 L866 245 L880 248 L874 254 L850 255.5 L830 255 L823 246Z" fill="#2c7ed8" filter="url(#bl2)"/>
<rect x="726" y="195" width="176" height="65" fill="#000" filter="url(#nzg)" clip-path="url(#cellc)" opacity="0.9"/>
<rect x="726" y="195" width="176" height="65" fill="#000" filter="url(#nzb)" clip-path="url(#cellc)" opacity="0.6"/>
<ellipse cx="808.5" cy="239" rx="21.5" ry="14" fill="#900c06" filter="url(#bl1)"/>
<path d="M796 246 Q806 234 822 232 Q814 240 804 250Z" fill="#4a0604" filter="url(#bl3)" opacity="0.6"/>
<rect x="785" y="224" width="48" height="30" fill="#000" filter="url(#nzy)" clip-path="url(#nucc)" opacity="0.8"/>
<path d="M882 246 L902 247 L902 252 L882 253Z" fill="#2a0505" filter="url(#bl3)"/>
<rect x="726" y="195" width="176" height="65" fill="#000" filter="url(#nz)" opacity="0.45"/>
<rect x="743" y="288" width="68" height="2" fill="#fff"/>
<text x="755.5" y="282" font-size="12.6" font-weight="bold" fill="#fff">100 µm</text>
</svg>
<div style="left:905.0px;top:262px;width:0;height:0;border-top:4px solid transparent;border-bottom:4px solid transparent;border-left:4px solid #000"></div>
<div style="left:905.0px;top:277px;width:0;height:0;border-top:4px solid transparent;border-bottom:4px solid transparent;border-left:4px solid #000"></div>
<div style="left:905.0px;top:292px;width:0;height:0;border-top:4px solid transparent;border-bottom:4px solid transparent;border-left:4px solid #000"></div>
<div style="left:905.0px;top:307px;width:0;height:0;border-top:4px solid transparent;border-bottom:4px solid transparent;border-left:4px solid #000"></div>
<div style="left:905.0px;top:322px;width:0;height:0;border-top:4px solid transparent;border-bottom:4px solid transparent;border-left:4px solid #000"></div>
<div style="left:905.0px;top:337px;width:0;height:0;border-top:4px solid transparent;border-bottom:4px solid transparent;border-left:4px solid #000"></div>
<div style="left:905.0px;top:352px;width:0;height:0;border-top:4px solid transparent;border-bottom:4px solid transparent;border-left:4px solid #000"></div>
<div style="left:905.0px;top:367px;width:0;height:0;border-top:4px solid transparent;border-bottom:4px solid transparent;border-left:4px solid #000"></div>
<div style="left:905.0px;top:382px;width:0;height:0;border-top:4px solid transparent;border-bottom:4px solid transparent;border-left:4px solid #000"></div>
<div style="left:905.0px;top:397px;width:0;height:0;border-top:4px solid transparent;border-bottom:4px solid transparent;border-left:4px solid #000"></div>
<div style="left:905.0px;top:412px;width:0;height:0;border-top:4px solid transparent;border-bottom:4px solid transparent;border-left:4px solid #000"></div>
<div class="t" style="top:110.82px;font-size:16px;color:#000;font-weight:bold;left:915px;">FLIM Image</div>
<div style="left:915px;top:131px;width:190px;height:22px;border:1px solid #8a8a8a;background:#fff"></div>
<div style="left:1085px;top:133px;width:18px;height:18px;border:1px solid #7a7a7a;background:linear-gradient(#e6ede5 0,#e6ede5 50%,#d5ddd4 50%);box-shadow:inset 1px 1px 0 #fff"></div>
<div style="left:1091px;top:142.0px;width:0;height:0;border-left:4px solid transparent;border-right:4px solid transparent;border-top:4px solid #000"></div>
<div class="t" style="top:135.24px;font-size:13px;color:#000;left:920px;">Events[Cnts]</div>
<div style="left:1110px;top:136px;width:12px;height:12px;border:1px solid #6a6a6a;background:#21a03d"></div>
<svg style="left:1110px;top:136px" width="14" height="14"><path d="M4.4 6.6 L6.5 9.9 L10.4 4.4" stroke="#000" stroke-width="2.3" fill="none" stroke-linecap="square"/></svg>
<div class="t" style="top:136.24px;font-size:13px;color:#000;left:1128px;">Active</div>
<svg style="left:915px;top:161px" width="272" height="32" viewBox="915 161 272 32">
<defs><linearGradient id="gg" x1="0" x2="1"><stop offset="0" stop-color="#000"/><stop offset="1" stop-color="#fff"/></linearGradient></defs>
<rect x="916" y="162" width="270" height="30" fill="#7a7a7a"/>
<rect x="917" y="163" width="268" height="28" fill="#000"/>
<rect x="962" y="164" width="178" height="26" fill="url(#gg)"/>
<rect x="1141" y="164" width="43" height="26" fill="#fff"/>
<path d="M962 164.5 L963.6 174.4 L965.7 183 L971.5 183.8 L993 185.6 L1021.8 185.6 L1043.4 183 L1072 184.5 L1096.5 186.2 L1100.9 185.2 L1115.2 186.6 L1122.4 188.8 L1129.6 188.1 L1133.2 190 L962 190Z" fill="#fff"/>
<rect x="1140" y="164" width="1" height="26" fill="#000"/>
</svg>
<div style="left:916px;top:198px;width:12px;height:12px;border:1px solid #6a6a6a;background:#21a03d"></div>
<svg style="left:916px;top:198px" width="14" height="14"><path d="M4.4 6.6 L6.5 9.9 L10.4 4.4" stroke="#000" stroke-width="2.3" fill="none" stroke-linecap="square"/></svg>
<div class="t" style="top:198.24px;font-size:13px;color:#000;left:934px;">Min</div>
<div style="left:963px;top:193px;width:58px;height:23px;border:1px solid #8a8a8a;background:#fff"></div>
<div class="t" style="top:197.24px;font-size:13px;color:#000;left:220px;width:800px;text-align:right;">0</div>
<div style="left:1024px;top:193.0px;width:17px;height:10.0px;border:1px solid #8a8a8a;background:#e3eae2"></div>
<div style="left:1024px;top:206.0px;width:17px;height:10.0px;border:1px solid #8a8a8a;background:#e3eae2"></div>
<div style="left:1029.0px;top:197.5px;width:0;height:0;border-left:4px solid transparent;border-right:4px solid transparent;border-bottom:4px solid #000"></div>
<div style="left:1029.0px;top:210.0px;width:0;height:0;border-left:4px solid transparent;border-right:4px solid transparent;border-top:4px solid #000"></div>
<div style="left:1052px;top:198px;width:12px;height:12px;border:1px solid #6a6a6a;background:#fff"></div>
<div class="t" style="top:198.24px;font-size:13px;color:#000;left:1070px;">Max</div>
<div style="left:1107px;top:193px;width:58px;height:23px;border:1px solid #8a8a8a;background:#fff"></div>
<div class="t" style="top:197.24px;font-size:13px;color:#000;left:364px;width:800px;text-align:right;">5966</div>
<div style="left:1168px;top:193.0px;width:17px;height:10.0px;border:1px solid #8a8a8a;background:#e3eae2"></div>
<div style="left:1168px;top:206.0px;width:17px;height:10.0px;border:1px solid #8a8a8a;background:#e3eae2"></div>
<div style="left:1173.0px;top:197.5px;width:0;height:0;border-left:4px solid transparent;border-right:4px solid transparent;border-bottom:4px solid #000"></div>
<div style="left:1173.0px;top:210.0px;width:0;height:0;border-left:4px solid transparent;border-right:4px solid transparent;border-top:4px solid #000"></div>
<div style="left:914px;top:222px;width:278px;height:1px;background:#a9bfa9;"></div>
<div style="left:914px;top:223px;width:278px;height:1px;background:#fafcfa;"></div>
<div style="left:915px;top:225px;width:190px;height:21px;border:1px solid #8a8a8a;background:#fff"></div>
<div style="left:1085px;top:227px;width:18px;height:17px;border:1px solid #7a7a7a;background:linear-gradient(#e6ede5 0,#e6ede5 50%,#d5ddd4 50%);box-shadow:inset 1px 1px 0 #fff"></div>
<div style="left:1091px;top:235.5px;width:0;height:0;border-left:4px solid transparent;border-right:4px solid transparent;border-top:4px solid #000"></div>
<div class="t" style="top:228.74px;font-size:13px;color:#000;left:920px;">Average life time[ns]</div>
<div style="left:1110px;top:229px;width:12px;height:12px;border:1px solid #6a6a6a;background:#21a03d"></div>
<svg style="left:1110px;top:229px" width="14" height="14"><path d="M4.4 6.6 L6.5 9.9 L10.4 4.4" stroke="#000" stroke-width="2.3" fill="none" stroke-linecap="square"/></svg>
<div class="t" style="top:229.24px;font-size:13px;color:#000;left:1128px;">Active</div>
<svg style="left:915px;top:255px" width="272" height="31" viewBox="915 255 272 31">
<defs><linearGradient id="rb" x1="0" x2="1">
<stop offset="0" stop-color="#3f98f0"/><stop offset="0.21" stop-color="#20e8f8"/><stop offset="0.49" stop-color="#10d810"/><stop offset="0.6" stop-color="#80e800"/><stop offset="0.745" stop-color="#f8f800"/><stop offset="0.87" stop-color="#f88800"/><stop offset="1" stop-color="#f00000"/></linearGradient></defs>
<rect x="916" y="256" width="270" height="29" fill="#7a7a7a"/>
<rect x="917" y="257" width="268" height="27" fill="#000"/>
<rect x="918" y="258" width="44" height="25" fill="#3f98f0"/>
<rect x="962" y="258" width="178" height="25" fill="url(#rb)"/>
<rect x="1141" y="258" width="43" height="25" fill="#f00000"/>
<path d="M918 283 L922.6 281.5 L928.4 278.7 L931 275 L933.4 280 L937 274.3 L942.7 272.9 L944.9 274.3 L951.4 270.7 L957.1 269.6 L961.5 268.1 L962 283Z" fill="#fff"/>
<path d="M962 283 L962.2 268.6 L965.7 266.4 L971.5 265 L975.8 263.2 L983 262.8 L988.7 261.4 L1000.2 260.6 L1007.4 260.4 L1014.6 261.4 L1021.8 261.4 L1029 263.2 L1033.3 265.3 L1039 264.7 L1046.2 266.4 L1057.7 267.6 L1065 269 L1077.9 270.4 L1089.4 270 L1095.1 270.4 L1100.9 269 L1115.2 267.1 L1126.7 265.3 L1132.5 265.7 L1139.5 266.4 L1139.5 283Z" fill="#fff"/>
<path d="M1141 283 L1141.1 267.6 L1151.2 269 L1158.4 270 L1168.4 273.3 L1172.7 272.5 L1181.4 274.8 L1182.3 283Z" fill="#fff"/>
<path d="M962.2 268.6 L965.7 266.4 L971.5 265 L975.8 263.2 L983 262.8 L988.7 261.4 L1000.2 260.6 L1007.4 260.4 L1014.6 261.4 L1021.8 261.4 L1029 263.2 L1033.3 265.3 L1039 264.7 L1046.2 266.4 L1057.7 267.6 L1065 269 L1077.9 270.4 L1089.4 270 L1095.1 270.4 L1100.9 269 L1115.2 267.1 L1126.7 265.3 L1132.5 265.7 L1139.5 266.4 M918 283 L922.6 281.5 L928.4 278.7 L931 275 L933.4 280 L937 274.3 L942.7 272.9 L944.9 274.3 L951.4 270.7 L957.1 269.6 L961.5 268.1 M1141.1 267.6 L1151.2 269 L1158.4 270 L1168.4 273.3 L1172.7 272.5 L1181.4 274.8 L1182.3 283" stroke="#000" stroke-width="0.9" fill="none"/>
<rect x="961" y="258" width="1.2" height="25" fill="#000"/>
<rect x="1140" y="258" width="1.2" height="25" fill="#000"/>
</svg>
<div style="left:916px;top:291px;width:12px;height:12px;border:1px solid #6a6a6a;background:#21a03d"></div>
<svg style="left:916px;top:291px" width="14" height="14"><path d="M4.4 6.6 L6.5 9.9 L10.4 4.4" stroke="#000" stroke-width="2.3" fill="none" stroke-linecap="square"/></svg>
<div class="t" style="top:291.24px;font-size:13px;color:#000;left:934px;">Min</div>
<div style="left:963px;top:286px;width:58px;height:23px;border:1px solid #8a8a8a;background:#fff"></div>
<div class="t" style="top:290.24px;font-size:13px;color:#000;left:220px;width:800px;text-align:right;">1,657</div>
<div style="left:1024px;top:286.0px;width:17px;height:10.0px;border:1px solid #8a8a8a;background:#e3eae2"></div>
<div style="left:1024px;top:299.0px;width:17px;height:10.0px;border:1px solid #8a8a8a;background:#e3eae2"></div>
<div style="left:1029.0px;top:290.5px;width:0;height:0;border-left:4px solid transparent;border-right:4px solid transparent;border-bottom:4px solid #000"></div>
<div style="left:1029.0px;top:303.0px;width:0;height:0;border-left:4px solid transparent;border-right:4px solid transparent;border-top:4px solid #000"></div>
<div style="left:1052px;top:291px;width:12px;height:12px;border:1px solid #6a6a6a;background:#21a03d"></div>
<svg style="left:1052px;top:291px" width="14" height="14"><path d="M4.4 6.6 L6.5 9.9 L10.4 4.4" stroke="#000" stroke-width="2.3" fill="none" stroke-linecap="square"/></svg>
<div class="t" style="top:291.24px;font-size:13px;color:#000;left:1070px;">Max</div>
<div style="left:1107px;top:286px;width:58px;height:23px;border:1px solid #8a8a8a;background:#fff"></div>
<div class="t" style="top:290.24px;font-size:13px;color:#000;left:364px;width:800px;text-align:right;">2,229</div>
<div style="left:1168px;top:286.0px;width:17px;height:10.0px;border:1px solid #8a8a8a;background:#e3eae2"></div>
<div style="left:1168px;top:299.0px;width:17px;height:10.0px;border:1px solid #8a8a8a;background:#e3eae2"></div>
<div style="left:1173.0px;top:290.5px;width:0;height:0;border-left:4px solid transparent;border-right:4px solid transparent;border-bottom:4px solid #000"></div>
<div style="left:1173.0px;top:303.0px;width:0;height:0;border-left:4px solid transparent;border-right:4px solid transparent;border-top:4px solid #000"></div>
<div style="left:917px;top:325px;width:12px;height:12px;border:1px solid #6a6a6a;background:#fff"></div>
<div class="t" style="top:324.74px;font-size:13px;color:#000;left:935px;">Optimized Rainbow</div>
<div style="left:914px;top:347px;width:278px;height:1px;background:#a9bfa9;"></div>
<div style="left:914px;top:348px;width:278px;height:1px;background:#fafcfa;"></div>
<div style="left:917px;top:354px;width:12px;height:12px;border:1px solid #6a6a6a;background:#fff"></div>
<div class="t" style="top:353.74px;font-size:13px;color:#000;left:941px;">Smoothing</div>
<div style="left:914px;top:377px;width:278px;height:1px;background:#a9bfa9;"></div>
<div style="left:914px;top:378px;width:278px;height:1px;background:#fafcfa;"></div>
<div style="left:1197px;top:84px;width:520px;height:940px;background:#fff;"></div>
<svg style="left:1197px;top:84px" width="520" height="470" viewBox="1197 84 520 470"><path d="M1291.5 113 V505 M1313.5 113 V505 M1334.5 113 V505 M1377.5 113 V505 M1398.5 113 V505 M1419.5 113 V505 M1462.5 113 V505 M1484.5 113 V505 M1505.5 113 V505 M1548.5 113 V505 M1569.5 113 V505 M1590.5 113 V505 M1633.5 113 V505 M1654.5 113 V505 M1676.5 113 V505 M1260 497.5 H1706 M1260 487.5 H1706 M1260 477.5 H1706 M1260 458.5 H1706 M1260 448.5 H1706 M1260 438.5 H1706 M1260 418.5 H1706 M1260 408.5 H1706 M1260 399.5 H1706 M1260 379.5 H1706 M1260 369.5 H1706 M1260 359.5 H1706 M1260 340.5 H1706 M1260 330.5 H1706 M1260 320.5 H1706 M1260 300.5 H1706 M1260 290.5 H1706 M1260 280.5 H1706 M1260 261.5 H1706 M1260 251.5 H1706 M1260 241.5 H1706 M1260 221.5 H1706 M1260 212.5 H1706 M1260 202.5 H1706 M1260 182.5 H1706 M1260 172.5 H1706 M1260 162.5 H1706 M1260 143.5 H1706 M1260 133.5 H1706 M1260 123.5 H1706 " stroke="#e2e2e2" stroke-width="1" fill="none"/><path d="M1270.5 113 V505 M1355.5 113 V505 M1441.5 113 V505 M1526.5 113 V505 M1612.5 113 V505 M1697.5 113 V505 M1260 468.5 H1706 M1260 428.5 H1706 M1260 389.5 H1706 M1260 349.5 H1706 M1260 310.5 H1706 M1260 271.5 H1706 M1260 231.5 H1706 M1260 192.5 H1706 M1260 152.5 H1706 " stroke="#a4a4a4" stroke-width="1" fill="none"/><rect x="1264" y="310" width="439" height="195" fill="#21a03d"/><path d="M1264.5 310 V505 M1275.5 310 V505 M1286.5 310 V505 M1297.5 310 V505 M1308.5 310 V505 M1319.5 310 V505 M1330.5 310 V505 M1341.5 310 V505 M1352.5 310 V505 M1363.5 310 V505 M1374.5 310 V505 M1385.5 310 V505 M1396.5 310 V505 M1407.5 310 V505 M1418.5 310 V505 M1429.5 310 V505 M1440.5 310 V505 M1450.5 310 V505 M1461.5 310 V505 M1472.5 310 V505 M1483.5 310 V505 M1494.5 310 V505 M1505.5 310 V505 M1516.5 310 V505 M1527.5 310 V505 M1538.5 310 V505 M1549.5 310 V505 M1560.5 310 V505 M1571.5 310 V505 M1582.5 310 V505 M1593.5 310 V505 M1604.5 310 V505 M1615.5 310 V505 M1626.5 310 V505 M1637.5 310 V505 M1648.5 310 V505 M1659.5 310 V505 M1670.5 310 V505 M1681.5 310 V505 M1692.5 310 V505 M1703.5 310 V505 M1264 310.5 H1703" stroke="#000" stroke-width="1" fill="none"/><path d="M1260 497.5 h3 M1706 497.5 h-3 M1260 487.5 h3 M1706 487.5 h-3 M1260 477.5 h3 M1706 477.5 h-3 M1260 468.5 h5 M1706 468.5 h-5 M1260 458.5 h3 M1706 458.5 h-3 M1260 448.5 h3 M1706 448.5 h-3 M1260 438.5 h3 M1706 438.5 h-3 M1260 428.5 h5 M1706 428.5 h-5 M1260 418.5 h3 M1706 418.5 h-3 M1260 408.5 h3 M1706 408.5 h-3 M1260 399.5 h3 M1706 399.5 h-3 M1260 389.5 h5 M1706 389.5 h-5 M1260 379.5 h3 M1706 379.5 h-3 M1260 369.5 h3 M1706 369.5 h-3 M1260 359.5 h3 M1706 359.5 h-3 M1260 349.5 h5 M1706 349.5 h-5 M1260 340.5 h3 M1706 340.5 h-3 M1260 330.5 h3 M1706 330.5 h-3 M1260 320.5 h3 M1706 320.5 h-3 M1260 310.5 h5 M1706 310.5 h-5 M1260 300.5 h3 M1706 300.5 h-3 M1260 290.5 h3 M1706 290.5 h-3 M1260 280.5 h3 M1706 280.5 h-3 M1260 271.5 h5 M1706 271.5 h-5 M1260 261.5 h3 M1706 261.5 h-3 M1260 251.5 h3 M1706 251.5 h-3 M1260 241.5 h3 M1706 241.5 h-3 M1260 231.5 h5 M1706 231.5 h-5 M1260 221.5 h3 M1706 221.5 h-3 M1260 212.5 h3 M1706 212.5 h-3 M1260 202.5 h3 M1706 202.5 h-3 M1260 192.5 h5 M1706 192.5 h-5 M1260 182.5 h3 M1706 182.5 h-3 M1260 172.5 h3 M1706 172.5 h-3 M1260 162.5 h3 M1706 162.5 h-3 M1260 152.5 h5 M1706 152.5 h-5 M1260 143.5 h3 M1706 143.5 h-3 M1260 133.5 h3 M1706 133.5 h-3 M1260 123.5 h3 M1706 123.5 h-3 M1270.5 113 v5 M1270.5 505 v-5 M1291.5 113 v3 M1291.5 505 v-3 M1313.5 113 v3 M1313.5 505 v-3 M1334.5 113 v3 M1334.5 505 v-3 M1355.5 113 v5 M1355.5 505 v-5 M1377.5 113 v3 M1377.5 505 v-3 M1398.5 113 v3 M1398.5 505 v-3 M1419.5 113 v3 M1419.5 505 v-3 M1441.5 113 v5 M1441.5 505 v-5 M1462.5 113 v3 M1462.5 505 v-3 M1484.5 113 v3 M1484.5 505 v-3 M1505.5 113 v3 M1505.5 505 v-3 M1526.5 113 v5 M1526.5 505 v-5 M1548.5 113 v3 M1548.5 505 v-3 M1569.5 113 v3 M1569.5 505 v-3 M1590.5 113 v3 M1590.5 505 v-3 M1612.5 113 v5 M1612.5 505 v-5 M1633.5 113 v3 M1633.5 505 v-3 M1654.5 113 v3 M1654.5 505 v-3 M1676.5 113 v3 M1676.5 505 v-3 M1697.5 113 v5 M1697.5 505 v-5 " stroke="#000" stroke-width="1" fill="none"/><rect x="1260.5" y="113.5" width="446" height="392" fill="none" stroke="#000" stroke-width="1.2"/><text x="1257.5" y="158.2" font-size="16" text-anchor="end">0,8</text><text x="1257.5" y="197.6" font-size="16" text-anchor="end">0,6</text><text x="1257.5" y="237.0" font-size="16" text-anchor="end">0,4</text><text x="1257.5" y="276.4" font-size="16" text-anchor="end">0,2</text><text x="1257.5" y="315.8" font-size="16" text-anchor="end">0,0</text><text x="1257.5" y="355.2" font-size="16" text-anchor="end">-0,2</text><text x="1257.5" y="394.6" font-size="16" text-anchor="end">-0,4</text><text x="1257.5" y="434.0" font-size="16" text-anchor="end">-0,6</text><text x="1257.5" y="473.4" font-size="16" text-anchor="end">-0,8</text><defs><clipPath id="xc0"><rect x="1197" y="505" width="509.6" height="40"/></clipPath></defs><g clip-path="url(#xc0)"><text x="1270.5" y="521.1" font-size="16" text-anchor="middle">0</text><text x="1356.0" y="521.1" font-size="16" text-anchor="middle">20</text><text x="1441.5" y="521.1" font-size="16" text-anchor="middle">40</text><text x="1527.0" y="521.1" font-size="16" text-anchor="middle">60</text><text x="1612.5" y="521.1" font-size="16" text-anchor="middle">80</text><text x="1698.0" y="521.1" font-size="16" text-anchor="middle">100</text></g><text transform="translate(1222 314.5) rotate(-90)" font-size="15" text-anchor="middle">Occur. [Events]</text><text x="1456.5" y="107" font-size="16" font-weight="bold" text-anchor="middle">Efficiency Histogram</text><text x="1455.5" y="541.7" font-size="16">E<tspan font-size="12" dy="6.2">FRET</tspan><tspan dy="-6.2"> []</tspan></text></svg>
<svg style="left:1197px;top:560px" width="520" height="470" viewBox="1197 560 520 470"><path d="M1291.5 589 V981 M1313.5 589 V981 M1334.5 589 V981 M1377.5 589 V981 M1398.5 589 V981 M1419.5 589 V981 M1462.5 589 V981 M1484.5 589 V981 M1505.5 589 V981 M1548.5 589 V981 M1569.5 589 V981 M1590.5 589 V981 M1633.5 589 V981 M1654.5 589 V981 M1676.5 589 V981 M1260 973.5 H1706 M1260 963.5 H1706 M1260 953.5 H1706 M1260 934.5 H1706 M1260 924.5 H1706 M1260 914.5 H1706 M1260 894.5 H1706 M1260 884.5 H1706 M1260 875.5 H1706 M1260 855.5 H1706 M1260 845.5 H1706 M1260 835.5 H1706 M1260 816.5 H1706 M1260 806.5 H1706 M1260 796.5 H1706 M1260 776.5 H1706 M1260 766.5 H1706 M1260 756.5 H1706 M1260 737.5 H1706 M1260 727.5 H1706 M1260 717.5 H1706 M1260 697.5 H1706 M1260 688.5 H1706 M1260 678.5 H1706 M1260 658.5 H1706 M1260 648.5 H1706 M1260 638.5 H1706 M1260 619.5 H1706 M1260 609.5 H1706 M1260 599.5 H1706 " stroke="#e2e2e2" stroke-width="1" fill="none"/><path d="M1270.5 589 V981 M1355.5 589 V981 M1441.5 589 V981 M1526.5 589 V981 M1612.5 589 V981 M1697.5 589 V981 M1260 944.5 H1706 M1260 904.5 H1706 M1260 865.5 H1706 M1260 825.5 H1706 M1260 786.5 H1706 M1260 747.5 H1706 M1260 707.5 H1706 M1260 668.5 H1706 M1260 628.5 H1706 " stroke="#a4a4a4" stroke-width="1" fill="none"/><rect x="1264" y="786" width="439" height="195" fill="#21a03d"/><path d="M1264.5 786 V981 M1275.5 786 V981 M1286.5 786 V981 M1297.5 786 V981 M1308.5 786 V981 M1319.5 786 V981 M1330.5 786 V981 M1341.5 786 V981 M1352.5 786 V981 M1363.5 786 V981 M1374.5 786 V981 M1385.5 786 V981 M1396.5 786 V981 M1407.5 786 V981 M1418.5 786 V981 M1429.5 786 V981 M1440.5 786 V981 M1450.5 786 V981 M1461.5 786 V981 M1472.5 786 V981 M1483.5 786 V981 M1494.5 786 V981 M1505.5 786 V981 M1516.5 786 V981 M1527.5 786 V981 M1538.5 786 V981 M1549.5 786 V981 M1560.5 786 V981 M1571.5 786 V981 M1582.5 786 V981 M1593.5 786 V981 M1604.5 786 V981 M1615.5 786 V981 M1626.5 786 V981 M1637.5 786 V981 M1648.5 786 V981 M1659.5 786 V981 M1670.5 786 V981 M1681.5 786 V981 M1692.5 786 V981 M1703.5 786 V981 M1264 786.5 H1703" stroke="#000" stroke-width="1" fill="none"/><path d="M1260 973.5 h3 M1706 973.5 h-3 M1260 963.5 h3 M1706 963.5 h-3 M1260 953.5 h3 M1706 953.5 h-3 M1260 944.5 h5 M1706 944.5 h-5 M1260 934.5 h3 M1706 934.5 h-3 M1260 924.5 h3 M1706 924.5 h-3 M1260 914.5 h3 M1706 914.5 h-3 M1260 904.5 h5 M1706 904.5 h-5 M1260 894.5 h3 M1706 894.5 h-3 M1260 884.5 h3 M1706 884.5 h-3 M1260 875.5 h3 M1706 875.5 h-3 M1260 865.5 h5 M1706 865.5 h-5 M1260 855.5 h3 M1706 855.5 h-3 M1260 845.5 h3 M1706 845.5 h-3 M1260 835.5 h3 M1706 835.5 h-3 M1260 825.5 h5 M1706 825.5 h-5 M1260 816.5 h3 M1706 816.5 h-3 M1260 806.5 h3 M1706 806.5 h-3 M1260 796.5 h3 M1706 796.5 h-3 M1260 786.5 h5 M1706 786.5 h-5 M1260 776.5 h3 M1706 776.5 h-3 M1260 766.5 h3 M1706 766.5 h-3 M1260 756.5 h3 M1706 756.5 h-3 M1260 747.5 h5 M1706 747.5 h-5 M1260 737.5 h3 M1706 737.5 h-3 M1260 727.5 h3 M1706 727.5 h-3 M1260 717.5 h3 M1706 717.5 h-3 M1260 707.5 h5 M1706 707.5 h-5 M1260 697.5 h3 M1706 697.5 h-3 M1260 688.5 h3 M1706 688.5 h-3 M1260 678.5 h3 M1706 678.5 h-3 M1260 668.5 h5 M1706 668.5 h-5 M1260 658.5 h3 M1706 658.5 h-3 M1260 648.5 h3 M1706 648.5 h-3 M1260 638.5 h3 M1706 638.5 h-3 M1260 628.5 h5 M1706 628.5 h-5 M1260 619.5 h3 M1706 619.5 h-3 M1260 609.5 h3 M1706 609.5 h-3 M1260 599.5 h3 M1706 599.5 h-3 M1270.5 589 v5 M1270.5 981 v-5 M1291.5 589 v3 M1291.5 981 v-3 M1313.5 589 v3 M1313.5 981 v-3 M1334.5 589 v3 M1334.5 981 v-3 M1355.5 589 v5 M1355.5 981 v-5 M1377.5 589 v3 M1377.5 981 v-3 M1398.5 589 v3 M1398.5 981 v-3 M1419.5 589 v3 M1419.5 981 v-3 M1441.5 589 v5 M1441.5 981 v-5 M1462.5 589 v3 M1462.5 981 v-3 M1484.5 589 v3 M1484.5 981 v-3 M1505.5 589 v3 M1505.5 981 v-3 M1526.5 589 v5 M1526.5 981 v-5 M1548.5 589 v3 M1548.5 981 v-3 M1569.5 589 v3 M1569.5 981 v-3 M1590.5 589 v3 M1590.5 981 v-3 M1612.5 589 v5 M1612.5 981 v-5 M1633.5 589 v3 M1633.5 981 v-3 M1654.5 589 v3 M1654.5 981 v-3 M1676.5 589 v3 M1676.5 981 v-3 M1697.5 589 v5 M1697.5 981 v-5 " stroke="#000" stroke-width="1" fill="none"/><rect x="1260.5" y="589.5" width="446" height="392" fill="none" stroke="#000" stroke-width="1.2"/><text x="1257.5" y="634.2" font-size="16" text-anchor="end">0,8</text><text x="1257.5" y="673.6" font-size="16" text-anchor="end">0,6</text><text x="1257.5" y="713.0" font-size="16" text-anchor="end">0,4</text><text x="1257.5" y="752.4" font-size="16" text-anchor="end">0,2</text><text x="1257.5" y="791.8" font-size="16" text-anchor="end">0,0</text><text x="1257.5" y="831.2" font-size="16" text-anchor="end">-0,2</text><text x="1257.5" y="870.6" font-size="16" text-anchor="end">-0,4</text><text x="1257.5" y="910.0" font-size="16" text-anchor="end">-0,6</text><text x="1257.5" y="949.4" font-size="16" text-anchor="end">-0,8</text><defs><clipPath id="xc476"><rect x="1197" y="981" width="509.6" height="40"/></clipPath></defs><g clip-path="url(#xc476)"><text x="1270.5" y="997.1" font-size="16" text-anchor="middle">0</text><text x="1356.0" y="997.1" font-size="16" text-anchor="middle">20</text><text x="1441.5" y="997.1" font-size="16" text-anchor="middle">40</text><text x="1527.0" y="997.1" font-size="16" text-anchor="middle">60</text><text x="1612.5" y="997.1" font-size="16" text-anchor="middle">80</text><text x="1698.0" y="997.1" font-size="16" text-anchor="middle">100</text></g><text transform="translate(1222 790.5) rotate(-90)" font-size="15" text-anchor="middle">Occur. [Events]</text><text x="1456.5" y="583" font-size="16" font-weight="bold" text-anchor="middle">Binding Histogram</text><text x="1483.5" y="1017.5" font-size="16" text-anchor="middle">Distances []</text></svg>
<div style="left:1717px;top:84px;width:195px;height:940px;background:#e0eadf;"></div>
<div style="left:1722px;top:97px;width:187px;height:109px;border:2px solid #777"></div>
<div style="left:1731px;top:89px;width:58px;height:14px;background:#e0eadf;"></div>
<div class="t" style="top:87.23px;font-size:13px;color:#000;left:1733px;">E{_FRET}</div>
<div class="t" style="top:114.73px;font-size:13px;color:#000;left:1729.5px;">Min:</div>
<div style="left:1769px;top:111.5px;width:114px;height:23px;border:1px solid #6e6e6e;border-top-color:#5a5a5a;background:#fff"></div>
<div style="left:1885px;top:111.5px;width:18px;height:10.0px;border:1px solid #8a8a8a;background:#e3eae2"></div>
<div style="left:1885px;top:124.5px;width:18px;height:10.0px;border:1px solid #8a8a8a;background:#e3eae2"></div>
<div style="left:1890.5px;top:116.0px;width:0;height:0;border-left:4px solid transparent;border-right:4px solid transparent;border-bottom:4px solid #000"></div>
<div style="left:1890.5px;top:128.5px;width:0;height:0;border-left:4px solid transparent;border-right:4px solid transparent;border-top:4px solid #000"></div>
<div class="t" style="top:115.03px;font-size:13px;color:#000;left:1066px;width:800px;text-align:right;">0,0</div>
<div class="t" style="top:145.74px;font-size:13px;color:#000;left:1729.5px;">Max:</div>
<div style="left:1769px;top:142.5px;width:114px;height:23px;border:1px solid #6e6e6e;border-top-color:#5a5a5a;background:#fff"></div>
<div style="left:1885px;top:142.5px;width:18px;height:10.0px;border:1px solid #8a8a8a;background:#e3eae2"></div>
<div style="left:1885px;top:155.5px;width:18px;height:10.0px;border:1px solid #8a8a8a;background:#e3eae2"></div>
<div style="left:1890.5px;top:147.0px;width:0;height:0;border-left:4px solid transparent;border-right:4px solid transparent;border-bottom:4px solid #000"></div>
<div style="left:1890.5px;top:159.5px;width:0;height:0;border-left:4px solid transparent;border-right:4px solid transparent;border-top:4px solid #000"></div>
<div class="t" style="top:146.04px;font-size:13px;color:#000;left:1066px;width:800px;text-align:right;">100,0</div>
<div class="t" style="top:176.74px;font-size:13px;color:#000;left:1729.5px;">Smpl. Pts.:</div>
<div style="left:1809px;top:173.5px;width:74px;height:23px;border:1px solid #6e6e6e;border-top-color:#5a5a5a;background:#fff"></div>
<div style="left:1885px;top:173.5px;width:18px;height:10.0px;border:1px solid #8a8a8a;background:#e3eae2"></div>
<div style="left:1885px;top:186.5px;width:18px;height:10.0px;border:1px solid #8a8a8a;background:#e3eae2"></div>
<div style="left:1890.5px;top:178.0px;width:0;height:0;border-left:4px solid transparent;border-right:4px solid transparent;border-bottom:4px solid #000"></div>
<div style="left:1890.5px;top:190.5px;width:0;height:0;border-left:4px solid transparent;border-right:4px solid transparent;border-top:4px solid #000"></div>
<div class="t" style="top:177.04px;font-size:13px;color:#000;left:1066px;width:800px;text-align:right;">40</div>
<div style="left:1723px;top:416px;width:186px;height:23px;border:1px solid #707070;border-radius:3px;background:linear-gradient(#e2eae1 0,#e2eae1 45%,#d0dbd0 45%,#d0dbd0 88%,#e2eae1 88%);box-shadow:inset 1px 1px 0 #fff,inset -1px -1px 0 #f4f7f4"></div>
<div class="t" style="top:420.24px;font-size:13px;color:#000;left:1417.0px;width:800px;text-align:center;">Recalculate Histogram</div>
<div style="left:1723px;top:447px;width:186px;height:23px;border:1px solid #707070;border-radius:3px;background:linear-gradient(#e2eae1 0,#e2eae1 45%,#d0dbd0 45%,#d0dbd0 88%,#e2eae1 88%);box-shadow:inset 1px 1px 0 #fff,inset -1px -1px 0 #f4f7f4"></div>
<div class="t" style="top:451.24px;font-size:13px;color:#000;left:1417.0px;width:800px;text-align:center;">Optimize View</div>
<div style="left:1723px;top:478px;width:186px;height:23px;border:1px solid #707070;border-radius:3px;background:linear-gradient(#e2eae1 0,#e2eae1 45%,#d0dbd0 45%,#d0dbd0 88%,#e2eae1 88%);box-shadow:inset 1px 1px 0 #fff,inset -1px -1px 0 #f4f7f4"></div>
<div class="t" style="top:482.24px;font-size:13px;color:#000;left:1417.0px;width:800px;text-align:center;">Autoscale Histogram</div>
<div style="left:1723px;top:509px;width:186px;height:23px;border:1px solid #707070;border-radius:3px;background:linear-gradient(#e2eae1 0,#e2eae1 45%,#d0dbd0 45%,#d0dbd0 88%,#e2eae1 88%);box-shadow:inset 1px 1px 0 #fff,inset -1px -1px 0 #f4f7f4"></div>
<div class="t" style="top:513.24px;font-size:13px;color:#000;left:1417.0px;width:800px;text-align:center;">Show All Events</div>
<div style="left:1722px;top:572px;width:187px;height:109px;border:2px solid #777"></div>
<div style="left:1731px;top:564px;width:58px;height:14px;background:#e0eadf;"></div>
<div class="t" style="top:562.24px;font-size:13px;color:#000;left:1733px;">Distances</div>
<div class="t" style="top:589.74px;font-size:13px;color:#000;left:1729.5px;">Min:</div>
<div style="left:1769px;top:586.5px;width:114px;height:23px;border:1px solid #6e6e6e;border-top-color:#5a5a5a;background:#fff"></div>
<div style="left:1885px;top:586.5px;width:18px;height:10.0px;border:1px solid #8a8a8a;background:#e3eae2"></div>
<div style="left:1885px;top:599.5px;width:18px;height:10.0px;border:1px solid #8a8a8a;background:#e3eae2"></div>
<div style="left:1890.5px;top:591.0px;width:0;height:0;border-left:4px solid transparent;border-right:4px solid transparent;border-bottom:4px solid #000"></div>
<div style="left:1890.5px;top:603.5px;width:0;height:0;border-left:4px solid transparent;border-right:4px solid transparent;border-top:4px solid #000"></div>
<div class="t" style="top:590.03px;font-size:13px;color:#000;left:1066px;width:800px;text-align:right;">0,0</div>
<div class="t" style="top:620.74px;font-size:13px;color:#000;left:1729.5px;">Max:</div>
<div style="left:1769px;top:617.5px;width:114px;height:23px;border:1px solid #6e6e6e;border-top-color:#5a5a5a;background:#fff"></div>
<div style="left:1885px;top:617.5px;width:18px;height:10.0px;border:1px solid #8a8a8a;background:#e3eae2"></div>
<div style="left:1885px;top:630.5px;width:18px;height:10.0px;border:1px solid #8a8a8a;background:#e3eae2"></div>
<div style="left:1890.5px;top:622.0px;width:0;height:0;border-left:4px solid transparent;border-right:4px solid transparent;border-bottom:4px solid #000"></div>
<div style="left:1890.5px;top:634.5px;width:0;height:0;border-left:4px solid transparent;border-right:4px solid transparent;border-top:4px solid #000"></div>
<div class="t" style="top:621.03px;font-size:13px;color:#000;left:1066px;width:800px;text-align:right;">100,0</div>
<div class="t" style="top:651.74px;font-size:13px;color:#000;left:1729.5px;">Smpl. Pts.:</div>
<div style="left:1809px;top:648.5px;width:74px;height:23px;border:1px solid #6e6e6e;border-top-color:#5a5a5a;background:#fff"></div>
<div style="left:1885px;top:648.5px;width:18px;height:10.0px;border:1px solid #8a8a8a;background:#e3eae2"></div>
<div style="left:1885px;top:661.5px;width:18px;height:10.0px;border:1px solid #8a8a8a;background:#e3eae2"></div>
<div style="left:1890.5px;top:653.0px;width:0;height:0;border-left:4px solid transparent;border-right:4px solid transparent;border-bottom:4px solid #000"></div>
<div style="left:1890.5px;top:665.5px;width:0;height:0;border-left:4px solid transparent;border-right:4px solid transparent;border-top:4px solid #000"></div>
<div class="t" style="top:652.03px;font-size:13px;color:#000;left:1066px;width:800px;text-align:right;">40</div>
<div style="left:1723px;top:891px;width:186px;height:23px;border:1px solid #707070;border-radius:3px;background:linear-gradient(#e2eae1 0,#e2eae1 45%,#d0dbd0 45%,#d0dbd0 88%,#e2eae1 88%);box-shadow:inset 1px 1px 0 #fff,inset -1px -1px 0 #f4f7f4"></div>
<div class="t" style="top:895.24px;font-size:13px;color:#000;left:1417.0px;width:800px;text-align:center;">Recalculate Histogram</div>
<div style="left:1723px;top:922px;width:186px;height:23px;border:1px solid #707070;border-radius:3px;background:linear-gradient(#e2eae1 0,#e2eae1 45%,#d0dbd0 45%,#d0dbd0 88%,#e2eae1 88%);box-shadow:inset 1px 1px 0 #fff,inset -1px -1px 0 #f4f7f4"></div>
<div class="t" style="top:926.24px;font-size:13px;color:#000;left:1417.0px;width:800px;text-align:center;">Optimize View</div>
<div style="left:1723px;top:953px;width:186px;height:23px;border:1px solid #707070;border-radius:3px;background:linear-gradient(#e2eae1 0,#e2eae1 45%,#d0dbd0 45%,#d0dbd0 88%,#e2eae1 88%);box-shadow:inset 1px 1px 0 #fff,inset -1px -1px 0 #f4f7f4"></div>
<div class="t" style="top:957.24px;font-size:13px;color:#000;left:1417.0px;width:800px;text-align:center;">Autoscale Histogram</div>
<div style="left:1723px;top:984px;width:186px;height:23px;border:1px solid #707070;border-radius:3px;background:linear-gradient(#e2eae1 0,#e2eae1 45%,#d0dbd0 45%,#d0dbd0 88%,#e2eae1 88%);box-shadow:inset 1px 1px 0 #fff,inset -1px -1px 0 #f4f7f4"></div>
<div class="t" style="top:988.24px;font-size:13px;color:#000;left:1417.0px;width:800px;text-align:center;">Show All Events</div>
<div style="left:328px;top:559px;width:2px;height:466px;background:#8a8a8a;"></div>
<div class="t" style="top:563.24px;font-size:13px;color:#000;left:330px;">Fitting Model:</div>
<div style="left:433px;top:559px;width:206px;height:22px;border:1px solid #8a8a8a;background:#fff"></div>
<div style="left:619px;top:561px;width:18px;height:18px;border:1px solid #7a7a7a;background:linear-gradient(#e6ede5 0,#e6ede5 50%,#d5ddd4 50%);box-shadow:inset 1px 1px 0 #fff"></div>
<div style="left:625px;top:570.0px;width:0;height:0;border-left:4px solid transparent;border-right:4px solid transparent;border-top:4px solid #000"></div>
<div class="t" style="top:563.24px;font-size:13px;color:#000;left:438px;">Monoexp. Donor</div>
<div style="left:643px;top:559px;width:74px;height:24px;border:1px solid #707070;border-radius:3px;background:linear-gradient(#e2eae1 0,#e2eae1 45%,#d0dbd0 45%,#d0dbd0 88%,#e2eae1 88%);box-shadow:inset 1px 1px 0 #fff,inset -1px -1px 0 #f4f7f4"></div>
<div class="t" style="top:563.74px;font-size:13px;color:#000;left:281.0px;width:800px;text-align:center;">Help</div>
<div class="t" style="top:594.24px;font-size:13px;color:#000;left:330px;">Decay:</div>
<div style="left:433px;top:590px;width:206px;height:22px;border:1px solid #8a8a8a;background:#fff"></div>
<div style="left:619px;top:592px;width:18px;height:18px;border:1px solid #7a7a7a;background:linear-gradient(#e6ede5 0,#e6ede5 50%,#d5ddd4 50%);box-shadow:inset 1px 1px 0 #fff"></div>
<div style="left:625px;top:601.0px;width:0;height:0;border-left:4px solid transparent;border-right:4px solid transparent;border-top:4px solid #000"></div>
<div class="t" style="top:594.24px;font-size:13px;color:#000;left:438px;">Overall Decay</div>
<div class="t" style="top:625.24px;font-size:13px;color:#000;left:330px;">IRF:</div>
<div style="left:363px;top:621px;width:66px;height:24px;border:1px solid #707070;border-radius:3px;background:linear-gradient(#e2eae1 0,#e2eae1 45%,#d0dbd0 45%,#d0dbd0 88%,#e2eae1 88%);box-shadow:inset 1px 1px 0 #fff,inset -1px -1px 0 #f4f7f4"></div>
<div class="t" style="top:625.74px;font-size:13px;color:#000;left:-3.0px;width:800px;text-align:center;">Import</div>
<div style="left:433px;top:621px;width:206px;height:22px;border:1px solid #8a8a8a;background:#fff"></div>
<div style="left:619px;top:623px;width:18px;height:18px;border:1px solid #7a7a7a;background:linear-gradient(#e6ede5 0,#e6ede5 50%,#d5ddd4 50%);box-shadow:inset 1px 1px 0 #fff"></div>
<div style="left:625px;top:632.0px;width:0;height:0;border-left:4px solid transparent;border-right:4px solid transparent;border-top:4px solid #000"></div>
<div class="t" style="top:625.24px;font-size:13px;color:#000;left:438px;">Calculated IRF</div>
<div style="left:643px;top:621px;width:74px;height:24px;border:1px solid #a4acb0;border-radius:3px;background:#e0eadf"></div>
<div class="t" style="top:625.74px;font-size:13px;color:#8a9098;left:281px;width:800px;text-align:center;">Remove</div>
<div class="t" style="top:656.24px;font-size:13px;color:#000;left:330px;">Model Parameters:</div>
<div style="left:643px;top:652px;width:74px;height:24px;border:1px solid #a4acb0;border-radius:3px;background:#e0eadf"></div>
<div class="t" style="top:656.74px;font-size:13px;color:#8a9098;left:280px;width:800px;text-align:center;">IRF for all</div>
<div style="left:330px;top:682px;width:390px;height:1px;background:#a9b5a9;"></div>
<div style="left:330px;top:683px;width:390px;height:1px;background:#fafcfa;"></div>
<div style="left:331px;top:685px;width:122px;height:19px;border:1px solid #707070;border-radius:3px;background:linear-gradient(#ff7a45 0,#ff7a45 45%,#ff5010 45%,#ff5010 88%,#ff7a45 88%);box-shadow:inset 1px 1px 0 #fff,inset -1px -1px 0 #f4f7f4"></div>
<div class="t" style="top:687.44px;font-size:13px;color:#000;left:-7.0px;width:800px;text-align:center;">Show All</div>
<div style="left:459px;top:685px;width:126px;height:19px;border:1px solid #707070;border-radius:3px;background:linear-gradient(#e2eae1 0,#e2eae1 45%,#d0dbd0 45%,#d0dbd0 88%,#e2eae1 88%);box-shadow:inset 1px 1px 0 #fff,inset -1px -1px 0 #f4f7f4"></div>
<div class="t" style="top:687.44px;font-size:13px;color:#000;left:123.0px;width:800px;text-align:center;">Export as ASCII</div>
<div style="left:591px;top:685px;width:126px;height:19px;border:1px solid #707070;border-radius:3px;background:linear-gradient(#e2eae1 0,#e2eae1 45%,#d0dbd0 45%,#d0dbd0 88%,#e2eae1 88%);box-shadow:inset 1px 1px 0 #fff,inset -1px -1px 0 #f4f7f4"></div>
<div class="t" style="top:687.44px;font-size:13px;color:#000;left:255.0px;width:800px;text-align:center;">Export to Clipboard</div>
<div style="left:330px;top:707px;width:369px;height:274px;overflow:hidden">
<div style="left:0px;top:0px;width:369px;height:274px;background:#000;"></div>
<div style="left:2px;top:2px;width:139px;height:21px;background:#e0eadf;"></div>
<div style="left:143px;top:2px;width:20px;height:21px;background:#e0eadf;"></div>
<div style="left:166px;top:2px;width:179px;height:21px;background:#e0eadf;"></div>
<div style="left:347px;top:2px;width:21px;height:21px;background:#fff;"></div>
<div class="t" style="left:2px;top:5.24px;font-size:13px;color:#000">Parameter</div>
<div class="t" style="left:167px;top:5.24px;font-size:13px;color:#000">Data Set (1)</div>
<svg style="left:144px;top:3px" width="19" height="19"><circle cx="9.5" cy="9.5" r="8" fill="none" stroke="#000" stroke-width="1"/><ellipse cx="9.5" cy="9.5" rx="3.5" ry="8" fill="none" stroke="#000" stroke-width="1"/><path d="M1.5 9.5 H17.5 M3 5 H16 M3 14 H16 M9.5 1.5 V17.5" stroke="#000" stroke-width="1"/></svg>
<svg style="left:350px;top:6px" width="14" height="14"><path d="M3 7 L6 10 L11 4" stroke="#000" stroke-width="2" fill="none"/></svg>
<div style="left:2px;top:25px;width:161px;height:22px;background:#e0eadf;"></div>
<div class="t" style="left:2px;top:31.24px;font-size:13px;color:#000">R<span style="font-size:10px">0</span></div>
<div style="left:166px;top:25px;width:161px;height:22px;background:#fff;"></div>
<div class="t" style="left:-66px;width:600px;text-align:center;top:28.74px;font-size:13px;color:#000">1,0000</div>
<div style="left:327px;top:25px;width:18px;height:22px;background:#e0eadf;"></div>
<div style="left:327px;top:25px;width:18px;height:22px;border-left:1px solid #000"></div>
<div style="left:332px;top:29.0px;width:0;height:0;border-left:4px solid transparent;border-right:4px solid transparent;border-bottom:4px solid #000"></div>
<div style="left:332px;top:40.0px;width:0;height:0;border-left:4px solid transparent;border-right:4px solid transparent;border-top:4px solid #000"></div>
<div style="left:329px;top:36px;width:14px;height:1px;background:#000"></div>
<div style="left:347px;top:25px;width:21px;height:22px;background:#e0eadf;"></div>
<div style="left:2px;top:49px;width:139px;height:22px;background:#e0eadf;"></div>
<div style="left:143px;top:49px;width:20px;height:22px;background:#fff;"></div>
<div class="t" style="left:2px;top:55.24px;font-size:13px;color:#000">A<span style="font-size:10px">D</span>[kCnts]</div>
<div style="left:90px;top:50px;width:47px;height:18px;border:1px solid #303030;border-radius:3px;background:linear-gradient(#e2eae1 0,#e2eae1 45%,#d0dbd0 45%);box-shadow:inset 1px 1px 0 #fff"></div>
<div class="t" style="left:-186px;width:600px;text-align:center;top:52.74px;font-size:13px;color:#000">Limits</div>
<div style="left:166px;top:49px;width:161px;height:22px;background:#fff;"></div>
<div class="t" style="left:-39.5px;width:600px;text-align:center;top:52.74px;font-size:13px;color:#000">0,000 ± 0,000</div>
<div style="left:327px;top:49px;width:18px;height:22px;background:#e0eadf;"></div>
<div style="left:327px;top:49px;width:18px;height:22px;border-left:1px solid #000"></div>
<div style="left:332px;top:53.0px;width:0;height:0;border-left:4px solid transparent;border-right:4px solid transparent;border-bottom:4px solid #000"></div>
<div style="left:332px;top:64.0px;width:0;height:0;border-left:4px solid transparent;border-right:4px solid transparent;border-top:4px solid #000"></div>
<div style="left:329px;top:60px;width:14px;height:1px;background:#000"></div>
<div style="left:347px;top:49px;width:21px;height:22px;background:#fff;"></div>
<svg style="left:351px;top:53px" width="14" height="14"><path d="M2.5 7 L5.5 10 L10.5 4" stroke="#000" stroke-width="2" fill="none"/></svg>
<div style="left:2px;top:73px;width:139px;height:22px;background:#e0eadf;"></div>
<div style="left:143px;top:73px;width:20px;height:22px;background:#fff;"></div>
<div class="t" style="left:2px;top:79.24px;font-size:13px;color:#000">τ<span style="font-size:10px">D</span>[ns]</div>
<div style="left:90px;top:74px;width:47px;height:18px;border:1px solid #303030;border-radius:3px;background:linear-gradient(#25a841 0,#25a841 45%,#1d9636 45%);box-shadow:inset 1px 1px 0 #5fc070"></div>
<div class="t" style="left:-186px;width:600px;text-align:center;top:76.74px;font-size:13px;color:#000">Limits</div>
<div style="left:166px;top:73px;width:161px;height:22px;background:#fff;"></div>
<div class="t" style="left:-39.5px;width:600px;text-align:center;top:76.74px;font-size:13px;color:#000">0,000 ± 0,000</div>
<div style="left:327px;top:73px;width:18px;height:22px;background:#e0eadf;"></div>
<div style="left:327px;top:73px;width:18px;height:22px;border-left:1px solid #000"></div>
<div style="left:332px;top:77.0px;width:0;height:0;border-left:4px solid transparent;border-right:4px solid transparent;border-bottom:4px solid #000"></div>
<div style="left:332px;top:88.0px;width:0;height:0;border-left:4px solid transparent;border-right:4px solid transparent;border-top:4px solid #000"></div>
<div style="left:329px;top:84px;width:14px;height:1px;background:#000"></div>
<div style="left:347px;top:73px;width:21px;height:22px;background:#fff;"></div>
<svg style="left:351px;top:77px" width="14" height="14"><path d="M2.5 7 L5.5 10 L10.5 4" stroke="#000" stroke-width="2" fill="none"/></svg>
<div style="left:2px;top:97px;width:139px;height:22px;background:#e0eadf;"></div>
<div style="left:143px;top:97px;width:20px;height:22px;background:#fff;"></div>
<div class="t" style="left:2px;top:103.24px;font-size:13px;color:#000">A<span style="font-size:10px">DA</span>[kCnts]</div>
<div style="left:90px;top:98px;width:47px;height:18px;border:1px solid #303030;border-radius:3px;background:linear-gradient(#e2eae1 0,#e2eae1 45%,#d0dbd0 45%);box-shadow:inset 1px 1px 0 #fff"></div>
<div class="t" style="left:-186px;width:600px;text-align:center;top:100.74px;font-size:13px;color:#000">Limits</div>
<div style="left:166px;top:97px;width:161px;height:22px;background:#fff;"></div>
<div class="t" style="left:-39.5px;width:600px;text-align:center;top:100.74px;font-size:13px;color:#000">0,000 ± 0,000</div>
<div style="left:327px;top:97px;width:18px;height:22px;background:#e0eadf;"></div>
<div style="left:327px;top:97px;width:18px;height:22px;border-left:1px solid #000"></div>
<div style="left:332px;top:101.0px;width:0;height:0;border-left:4px solid transparent;border-right:4px solid transparent;border-bottom:4px solid #000"></div>
<div style="left:332px;top:112.0px;width:0;height:0;border-left:4px solid transparent;border-right:4px solid transparent;border-top:4px solid #000"></div>
<div style="left:329px;top:108px;width:14px;height:1px;background:#000"></div>
<div style="left:347px;top:97px;width:21px;height:22px;background:#fff;"></div>
<svg style="left:351px;top:101px" width="14" height="14"><path d="M2.5 7 L5.5 10 L10.5 4" stroke="#000" stroke-width="2" fill="none"/></svg>
<div style="left:2px;top:121px;width:139px;height:22px;background:#e0eadf;"></div>
<div style="left:143px;top:121px;width:20px;height:22px;background:#fff;"></div>
<div class="t" style="left:2px;top:127.24px;font-size:13px;color:#000">τ<span style="font-size:10px">DA</span>[ns]</div>
<div style="left:90px;top:122px;width:47px;height:18px;border:1px solid #303030;border-radius:3px;background:linear-gradient(#25a841 0,#25a841 45%,#1d9636 45%);box-shadow:inset 1px 1px 0 #5fc070"></div>
<div class="t" style="left:-186px;width:600px;text-align:center;top:124.74px;font-size:13px;color:#000">Limits</div>
<div style="left:166px;top:121px;width:161px;height:22px;background:#fff;"></div>
<div class="t" style="left:-39.5px;width:600px;text-align:center;top:124.74px;font-size:13px;color:#000">0,000 ± 0,000</div>
<div style="left:327px;top:121px;width:18px;height:22px;background:#e0eadf;"></div>
<div style="left:327px;top:121px;width:18px;height:22px;border-left:1px solid #000"></div>
<div style="left:332px;top:125.0px;width:0;height:0;border-left:4px solid transparent;border-right:4px solid transparent;border-bottom:4px solid #000"></div>
<div style="left:332px;top:136.0px;width:0;height:0;border-left:4px solid transparent;border-right:4px solid transparent;border-top:4px solid #000"></div>
<div style="left:329px;top:132px;width:14px;height:1px;background:#000"></div>
<div style="left:347px;top:121px;width:21px;height:22px;background:#fff;"></div>
<svg style="left:351px;top:125px" width="14" height="14"><path d="M2.5 7 L5.5 10 L10.5 4" stroke="#000" stroke-width="2" fill="none"/></svg>
<div style="left:2px;top:145px;width:139px;height:22px;background:#e0eadf;"></div>
<div style="left:143px;top:145px;width:20px;height:22px;background:#fff;"></div>
<div class="t" style="left:2px;top:151.24px;font-size:13px;color:#000">Bkgr<span style="font-size:10px">Dec</span>[Cnts]</div>
<div style="left:90px;top:146px;width:47px;height:18px;border:1px solid #303030;border-radius:3px;background:linear-gradient(#e2eae1 0,#e2eae1 45%,#d0dbd0 45%);box-shadow:inset 1px 1px 0 #fff"></div>
<div class="t" style="left:-186px;width:600px;text-align:center;top:148.74px;font-size:13px;color:#000">Limits</div>
<div style="left:166px;top:145px;width:161px;height:22px;background:#fff;"></div>
<div class="t" style="left:-39.5px;width:600px;text-align:center;top:148.74px;font-size:13px;color:#000">0,000 ± 0,000</div>
<div style="left:327px;top:145px;width:18px;height:22px;background:#e0eadf;"></div>
<div style="left:327px;top:145px;width:18px;height:22px;border-left:1px solid #000"></div>
<div style="left:332px;top:149.0px;width:0;height:0;border-left:4px solid transparent;border-right:4px solid transparent;border-bottom:4px solid #000"></div>
<div style="left:332px;top:160.0px;width:0;height:0;border-left:4px solid transparent;border-right:4px solid transparent;border-top:4px solid #000"></div>
<div style="left:329px;top:156px;width:14px;height:1px;background:#000"></div>
<div style="left:347px;top:145px;width:21px;height:22px;background:#fff;"></div>
<svg style="left:351px;top:149px" width="14" height="14"><path d="M2.5 7 L5.5 10 L10.5 4" stroke="#000" stroke-width="2" fill="none"/></svg>
<div style="left:2px;top:169px;width:139px;height:22px;background:#e0eadf;"></div>
<div style="left:143px;top:169px;width:20px;height:22px;background:#fff;"></div>
<div class="t" style="left:2px;top:175.24px;font-size:13px;color:#000">Shift<span style="font-size:10px">IRF</span>[ns]</div>
<div style="left:90px;top:170px;width:47px;height:18px;border:1px solid #303030;border-radius:3px;background:linear-gradient(#e2eae1 0,#e2eae1 45%,#d0dbd0 45%);box-shadow:inset 1px 1px 0 #fff"></div>
<div class="t" style="left:-186px;width:600px;text-align:center;top:172.74px;font-size:13px;color:#000">Limits</div>
<div style="left:166px;top:169px;width:161px;height:22px;background:#fff;"></div>
<div class="t" style="left:-39.5px;width:600px;text-align:center;top:172.74px;font-size:13px;color:#000">0,000 ± 0,000</div>
<div style="left:327px;top:169px;width:18px;height:22px;background:#e0eadf;"></div>
<div style="left:327px;top:169px;width:18px;height:22px;border-left:1px solid #000"></div>
<div style="left:332px;top:173.0px;width:0;height:0;border-left:4px solid transparent;border-right:4px solid transparent;border-bottom:4px solid #000"></div>
<div style="left:332px;top:184.0px;width:0;height:0;border-left:4px solid transparent;border-right:4px solid transparent;border-top:4px solid #000"></div>
<div style="left:329px;top:180px;width:14px;height:1px;background:#000"></div>
<div style="left:347px;top:169px;width:21px;height:22px;background:#fff;"></div>
<svg style="left:351px;top:173px" width="14" height="14"><path d="M2.5 7 L5.5 10 L10.5 4" stroke="#000" stroke-width="2" fill="none"/></svg>
<div style="left:2px;top:193px;width:139px;height:22px;background:#e0eadf;"></div>
<div style="left:143px;top:193px;width:20px;height:22px;background:#fff;"></div>
<div class="t" style="left:2px;top:199.24px;font-size:13px;color:#000">Bkgr<span style="font-size:10px">IRF</span>[Cnts]</div>
<div style="left:90px;top:194px;width:47px;height:18px;border:1px solid #303030;border-radius:3px;background:linear-gradient(#e2eae1 0,#e2eae1 45%,#d0dbd0 45%);box-shadow:inset 1px 1px 0 #fff"></div>
<div class="t" style="left:-186px;width:600px;text-align:center;top:196.74px;font-size:13px;color:#000">Limits</div>
<div style="left:166px;top:193px;width:161px;height:22px;background:#fff;"></div>
<div class="t" style="left:-39.5px;width:600px;text-align:center;top:196.74px;font-size:13px;color:#000">0,000 ± 0,000</div>
<div style="left:327px;top:193px;width:18px;height:22px;background:#e0eadf;"></div>
<div style="left:327px;top:193px;width:18px;height:22px;border-left:1px solid #000"></div>
<div style="left:332px;top:197.0px;width:0;height:0;border-left:4px solid transparent;border-right:4px solid transparent;border-bottom:4px solid #000"></div>
<div style="left:332px;top:208.0px;width:0;height:0;border-left:4px solid transparent;border-right:4px solid transparent;border-top:4px solid #000"></div>
<div style="left:329px;top:204px;width:14px;height:1px;background:#000"></div>
<div style="left:347px;top:193px;width:21px;height:22px;background:#fff;"></div>
<svg style="left:351px;top:197px" width="14" height="14"><path d="M2.5 7 L5.5 10 L10.5 4" stroke="#000" stroke-width="2" fill="none"/></svg>
<div style="left:2px;top:217px;width:161px;height:22px;background:#e0eadf;"></div>
<div class="t" style="left:2px;top:223.24px;font-size:13px;color:#000">E</div>
<div style="left:166px;top:217px;width:202px;height:22px;background:#e0eadf;"></div>
<div class="t" style="left:-39.5px;width:600px;text-align:center;top:220.74px;font-size:13px;color:#000">0,000 ± 0,000</div>
<div style="left:2px;top:241px;width:161px;height:22px;background:#e0eadf;"></div>
<div class="t" style="left:2px;top:247.24px;font-size:13px;color:#000">Binding</div>
<div style="left:166px;top:241px;width:202px;height:22px;background:#e0eadf;"></div>
<div class="t" style="left:-39.5px;width:600px;text-align:center;top:244.74px;font-size:13px;color:#000">0,000 ± 0,000</div>
<div style="left:2px;top:265px;width:161px;height:22px;background:#e0eadf;"></div>
<div class="t" style="left:2px;top:271.24px;font-size:13px;color:#000"></div>
<div style="left:166px;top:265px;width:202px;height:22px;background:#e0eadf;"></div>
<div class="t" style="left:-39.5px;width:600px;text-align:center;top:268.74px;font-size:13px;color:#000">0,000 ± 0,000</div>
</div>
<div style="left:699px;top:707px;width:20px;height:272px;background:#d0dbd0;"></div>
<div style="left:699px;top:707px;width:19px;height:19px;border-right:1px solid #808080;border-bottom:2px solid #808080;background:#e2e9e1"></div>
<div style="left:704.5px;top:714.5px;width:0;height:0;border-left:4px solid transparent;border-right:4px solid transparent;border-bottom:4px solid #000"></div>
<div style="left:699px;top:728px;width:19px;height:19px;border-right:1px solid #808080;border-bottom:1px solid #808080;background:#e2e9e1"></div>
<div style="left:699px;top:958px;width:18px;height:19px;border:1px solid #808080;background:#e2e9e1"></div>
<div style="left:704px;top:966.0px;width:0;height:0;border-left:4px solid transparent;border-right:4px solid transparent;border-top:4px solid #000"></div>
<div style="left:719px;top:707px;width:1px;height:294px;background:#808080;"></div>
<div style="left:330px;top:981px;width:369px;height:20px;background:#d0dbd0;"></div>
<div style="left:330px;top:981px;width:18px;height:18px;border:1px solid #808080;background:#e2e9e1"></div>
<div style="left:337.0px;top:986px;width:0;height:0;border-top:4px solid transparent;border-bottom:4px solid transparent;border-right:4px solid #000"></div>
<div style="left:350px;top:981px;width:18px;height:18px;border:1px solid #808080;background:#e2e9e1"></div>
<div style="left:678px;top:981px;width:19px;height:18px;border:1px solid #808080;background:#e2e9e1"></div>
<div style="left:686.0px;top:986px;width:0;height:0;border-top:4px solid transparent;border-bottom:4px solid transparent;border-left:4px solid #000"></div>
<div style="left:331px;top:1004px;width:57px;height:20px;border:1px solid #707070;border-radius:3px;background:linear-gradient(#e2eae1 0,#e2eae1 45%,#d0dbd0 45%,#d0dbd0 88%,#e2eae1 88%);box-shadow:inset 1px 1px 0 #fff,inset -1px -1px 0 #f4f7f4"></div>
<div class="t" style="top:1008.24px;font-size:13px;color:#000;left:-39.5px;width:800px;text-align:center;">Clear</div>
<div style="left:396px;top:1004px;width:57px;height:20px;border:1px solid #707070;border-radius:3px;background:linear-gradient(#ff7a45 0,#ff7a45 45%,#ff5010 45%,#ff5010 88%,#ff7a45 88%);box-shadow:inset 1px 1px 0 #fff,inset -1px -1px 0 #f4f7f4"></div>
<div class="t" style="top:1008.24px;font-size:13px;color:#000;left:25.5px;width:800px;text-align:center;">Initial Fit</div>
<div style="left:459px;top:1004px;width:57px;height:20px;border:1px solid #707070;border-radius:3px;background:linear-gradient(#e2eae1 0,#e2eae1 45%,#d0dbd0 45%,#d0dbd0 88%,#e2eae1 88%);box-shadow:inset 1px 1px 0 #fff,inset -1px -1px 0 #f4f7f4"></div>
<div class="t" style="top:1008.24px;font-size:13px;color:#000;left:88.5px;width:800px;text-align:center;">Fit</div>
<div style="left:523px;top:1004px;width:57px;height:20px;border:1px solid #707070;border-radius:3px;background:linear-gradient(#e2eae1 0,#e2eae1 45%,#d0dbd0 45%,#d0dbd0 88%,#e2eae1 88%);box-shadow:inset 1px 1px 0 #fff,inset -1px -1px 0 #f4f7f4"></div>
<div class="t" style="top:1008.24px;font-size:13px;color:#000;left:152.5px;width:800px;text-align:center;">Fit All</div>
<div class="t" style="top:1007.24px;font-size:13px;color:#000;left:593px;">X² =</div>
<div style="left:625px;top:1004px;width:70px;height:20px;border:1px solid #9a9a9a;background:#e0eadf"></div>
<div class="t" style="top:1007.74px;font-size:13px;color:#000;left:-107px;width:800px;text-align:right;">0,000</div>
<div style="left:6px;top:1023px;width:1908px;height:1px;background:#7a7a7a;"></div>
<div style="left:730px;top:564px;width:12px;height:12px;border:1px solid #6a6a6a;background:#21a03d"></div>
<svg style="left:730px;top:564px" width="14" height="14"><path d="M4.4 6.6 L6.5 9.9 L10.4 4.4" stroke="#000" stroke-width="2.3" fill="none" stroke-linecap="square"/></svg>
<div class="t" style="top:563.74px;font-size:13px;color:#000;left:748px;">Apply Limits to All Curves</div>
<div class="t" style="top:563.24px;font-size:13px;color:#000;left:1050px;">Number of Photons: 2233</div>
<div class="t" style="top:593.24px;font-size:13px;color:#000;left:730px;">Lower Boundary:</div>
<div style="left:849px;top:591px;width:138px;height:22px;border:1px solid #8a8a8a;background:#fff"></div>
<div class="t" style="top:594.74px;font-size:13px;color:#000;left:186px;width:800px;text-align:right;">0,08 ns</div>
<div style="left:990px;top:591.0px;width:17px;height:9.5px;border:1px solid #8a8a8a;background:#e3eae2"></div>
<div style="left:990px;top:603.5px;width:17px;height:9.5px;border:1px solid #8a8a8a;background:#e3eae2"></div>
<div style="left:995.0px;top:595.25px;width:0;height:0;border-left:4px solid transparent;border-right:4px solid transparent;border-bottom:4px solid #000"></div>
<div style="left:995.0px;top:607.25px;width:0;height:0;border-left:4px solid transparent;border-right:4px solid transparent;border-top:4px solid #000"></div>
<div class="t" style="top:593.74px;font-size:13px;color:#000;left:1026px;">Upper Boundary:</div>
<div style="left:1145px;top:590px;width:50px;height:23px;border:1px solid #8a8a8a;border-right:none;background:#fff"></div>
<div style="left:1197px;top:560px;width:1px;height:460px;background:#fff;"></div>
<div style="left:721px;top:620px;width:263px;height:393px;background:#fff;"></div>
<svg style="left:721px;top:620px" width="263" height="393" viewBox="721 620 263 393"><defs><clipPath id="pc"><rect x="784" y="651" width="200" height="350"/></clipPath><clipPath id="yl"><rect x="721" y="651" width="70" height="349"/></clipPath><clipPath id="rl"><rect x="721" y="900" width="70" height="97.5"/></clipPath></defs><path d="M817.5 651.5 V998.3 M831.5 651.5 V998.3 M845.5 651.5 V998.3 M859.5 651.5 V998.3 M887.5 651.5 V998.3 M901.5 651.5 V998.3 M915.5 651.5 V998.3 M929.5 651.5 V998.3 M957.5 651.5 V998.3 M971.5 651.5 V998.3 M784.5 874.5 H984 M784.5 865.5 H984 M784.5 860.5 H984 M784.5 855.5 H984 M784.5 851.5 H984 M784.5 848.5 H984 M784.5 846.5 H984 M784.5 843.5 H984 M784.5 827.5 H984 M784.5 819.5 H984 M784.5 813.5 H984 M784.5 808.5 H984 M784.5 805.5 H984 M784.5 802.5 H984 M784.5 799.5 H984 M784.5 797.5 H984 M784.5 781.5 H984 M784.5 772.5 H984 M784.5 767.5 H984 M784.5 762.5 H984 M784.5 758.5 H984 M784.5 755.5 H984 M784.5 753.5 H984 M784.5 750.5 H984 M784.5 734.5 H984 M784.5 726.5 H984 M784.5 720.5 H984 M784.5 715.5 H984 M784.5 712.5 H984 M784.5 709.5 H984 M784.5 706.5 H984 M784.5 704.5 H984 M784.5 688.5 H984 M784.5 679.5 H984 M784.5 674.5 H984 M784.5 669.5 H984 M784.5 665.5 H984 M784.5 662.5 H984 M784.5 660.5 H984 M784.5 657.5 H984 M784.5 901.5 H984 M784.5 920.5 H984 M784.5 930.5 H984 M784.5 939.5 H984 M784.5 959.5 H984 M784.5 969.5 H984 M784.5 978.5 H984 " stroke="#e2e2e2" stroke-width="1" fill="none"/><path d="M803.5 651.5 V998.3 M873.5 651.5 V998.3 M943.5 651.5 V998.3 M784.5 888.5 H984 M784.5 841.5 H984 M784.5 794.5 H984 M784.5 748.5 H984 M784.5 702.5 H984 M784.5 655.5 H984 M784.5 910.5 H984 M784.5 949.5 H984 M784.5 988.5 H984 " stroke="#a0a0a0" stroke-width="1" fill="none"/><path d="M802.8 651.5 v5 M802.8 998.3 v-5 M802.8 900 v-5 M816.8 651.5 v3 M816.8 998.3 v-3 M816.8 900 v-3 M830.8 651.5 v3 M830.8 998.3 v-3 M830.8 900 v-3 M844.7 651.5 v3 M844.7 998.3 v-3 M844.7 900 v-3 M858.7 651.5 v3 M858.7 998.3 v-3 M858.7 900 v-3 M872.7 651.5 v5 M872.7 998.3 v-5 M872.7 900 v-5 M886.7 651.5 v3 M886.7 998.3 v-3 M886.7 900 v-3 M900.7 651.5 v3 M900.7 998.3 v-3 M900.7 900 v-3 M914.6 651.5 v3 M914.6 998.3 v-3 M914.6 900 v-3 M928.6 651.5 v3 M928.6 998.3 v-3 M928.6 900 v-3 M942.6 651.5 v5 M942.6 998.3 v-5 M942.6 900 v-5 M956.6 651.5 v3 M956.6 998.3 v-3 M956.6 900 v-3 M970.6 651.5 v3 M970.6 998.3 v-3 M970.6 900 v-3 M784.5 887.5 h5 M784.5 873.5 h3 M784.5 865.3 h3 M784.5 859.5 h3 M784.5 855.0 h3 M784.5 851.3 h3 M784.5 848.2 h3 M784.5 845.5 h3 M784.5 843.1 h3 M784.5 841.0 h5 M784.5 827.0 h3 M784.5 818.8 h3 M784.5 813.0 h3 M784.5 808.5 h3 M784.5 804.8 h3 M784.5 801.7 h3 M784.5 799.0 h3 M784.5 796.6 h3 M784.5 794.5 h5 M784.5 780.5 h3 M784.5 772.3 h3 M784.5 766.5 h3 M784.5 762.0 h3 M784.5 758.3 h3 M784.5 755.2 h3 M784.5 752.5 h3 M784.5 750.1 h3 M784.5 748.0 h5 M784.5 734.0 h3 M784.5 725.8 h3 M784.5 720.0 h3 M784.5 715.5 h3 M784.5 711.8 h3 M784.5 708.7 h3 M784.5 706.0 h3 M784.5 703.6 h3 M784.5 701.5 h5 M784.5 687.5 h3 M784.5 679.3 h3 M784.5 673.5 h3 M784.5 669.0 h3 M784.5 665.3 h3 M784.5 662.2 h3 M784.5 659.5 h3 M784.5 657.1 h3 M784.5 655.0 h5 M784.5 900.6 h3 M784.5 910.3 h5 M784.5 920.0 h3 M784.5 929.7 h3 M784.5 939.5 h3 M784.5 949.2 h5 M784.5 958.9 h3 M784.5 968.7 h3 M784.5 978.4 h3 M784.5 988.1 h5 " stroke="#000" stroke-width="1" fill="none"/><path d="M811.7 887 V899 M822 887 V899 M831 887 V899 M851.8 887 V899 M877.3 887 V899 M939.2 887 V899 M970 887 V899 " stroke="#c0c0c0" stroke-width="2.2" fill="none"/><path d="M817.5 899 V771 M818.5 770 L819 700 L819.5 659.5 L821 659.5 L822 690 L823 712 L824 740 L824.8 780 L825 899" stroke="#f00000" stroke-width="2.2" fill="none" clip-path="url(#pc)"/><path d="M803.0 779.4 L803.8 778.4 L804.6 781.4 L805.4 777.9 L806.2 780.7 L807.0 779.7 L807.8 777.8 L808.6 780.5 L809.4 777.7 L810.2 780.1 L811.0 777.9 L811.8 778.0 L812.6 780.0 L813.4 782.5 L814.2 778.2 L815.0 778.8 L815.8 781.3 L816.6 783.2 L817.5 778.0 L818.2 740.0 L819.0 690.0 L820.5 667.0 L823.5 658.5 L824.0 659.5 L825.0 661.2 L826.0 663.5 L827.0 664.7 L828.0 667.2 L829.0 668.6 L830.0 670.3 L831.0 672.2 L832.0 674.2 L833.0 676.5 L834.0 677.8 L835.0 680.0 L836.0 681.9 L837.0 683.6 L838.0 685.6 L839.0 687.1 L840.0 688.9 L841.0 690.9 L842.0 693.2 L843.0 694.8 L844.0 696.6 L845.0 698.7 L846.0 700.0 L847.0 701.2 L848.0 703.0 L849.0 704.2 L850.0 705.2 L851.0 706.8 L852.0 708.1 L853.0 709.7 L854.0 710.9 L855.0 711.9 L856.0 713.8 L857.0 714.5 L858.0 716.0 L859.0 717.6 L860.0 718.5 L861.0 720.1 L862.0 721.1 L863.0 722.9 L864.0 724.3 L865.0 725.5 L866.0 727.0 L867.0 727.9 L868.0 729.5 L869.0 730.8 L870.0 732.1 L871.0 733.3 L872.0 735.0 L873.0 736.4 L874.0 737.1 L875.0 738.3 L876.0 738.9 L877.0 740.5 L878.0 741.5 L879.0 742.8 L880.0 744.6 L881.0 743.7 L882.0 745.1 L883.0 747.2 L884.0 745.9 L885.0 748.6 L886.0 748.6 L887.0 749.4 L888.0 750.3 L889.0 753.8 L890.0 752.4 L891.0 753.8 L892.0 755.2 L893.0 757.8 L894.0 755.8 L895.0 758.1 L896.0 759.3 L897.0 761.4 L898.0 762.1 L899.0 763.2 L900.0 761.9 L901.0 763.3 L902.0 764.0 L903.0 766.8 L904.0 768.0 L905.0 765.7 L906.0 766.2 L907.0 766.9 L908.0 767.3 L909.0 768.7 L910.0 769.5 L911.0 768.8 L912.0 768.3 L913.0 770.2 L914.0 770.5 L915.0 771.7 L916.0 773.5 L917.0 773.0 L918.0 772.8 L919.0 773.7 L920.0 774.3 L921.0 772.3 L922.0 775.6 L923.0 775.4 L924.0 776.0 L925.0 776.0 L926.0 774.8 L927.0 775.0 L928.0 774.2 L929.0 776.4 L930.0 774.6 L931.0 774.9 L932.0 775.6 L933.0 775.7 L934.0 776.6 L935.0 775.8 L936.0 775.8 L937.0 776.5 L938.0 776.5 L939.0 777.6 L940.0 776.5 L941.0 779.7 L942.0 778.9 L943.0 777.4 L944.0 777.9 L945.0 778.4 L946.0 778.6 L947.0 777.9 L948.0 780.6 L949.0 781.3 L950.0 779.5 L951.0 779.7 L952.0 778.4 L953.0 778.5 L954.0 779.4 L955.0 779.2 L956.0 781.3 L957.0 778.9 L958.0 778.5 L959.0 781.9 L960.0 780.4 L961.0 779.1 L962.0 780.6 L963.0 778.8 L964.0 780.7 L965.0 782.4 L966.0 782.0 L967.0 781.5 L968.0 780.0 L969.0 780.4 L970.0 779.7 L971.0 782.0 L972.0 781.2 L973.0 782.1 L974.0 780.6 L975.0 780.2 L976.0 782.4" stroke="#1f9a35" stroke-width="3" fill="none" stroke-linejoin="round" clip-path="url(#pc)"/><path d="M802.2 651.5 V998.3 M977 651.5 V998.3" stroke="#0000f0" stroke-width="2.5" fill="none"/><path d="M803 676.4 L807 680.4 L803 684.4Z M976.5 676.4 L972.5 680.4 L976.5 684.4Z M803 706.3 L807 710.3 L803 714.3Z M976.5 706.3 L972.5 710.3 L976.5 714.3Z M803 736.2 L807 740.2 L803 744.2Z M976.5 736.2 L972.5 740.2 L976.5 744.2Z M803 766.1 L807 770.1 L803 774.1Z M976.5 766.1 L972.5 770.1 L976.5 774.1Z M803 796.0 L807 800.0 L803 804.0Z M976.5 796.0 L972.5 800.0 L976.5 804.0Z M803 825.9 L807 829.9 L803 833.9Z M976.5 825.9 L972.5 829.9 L976.5 833.9Z M803 855.8 L807 859.8 L803 863.8Z M976.5 855.8 L972.5 859.8 L976.5 863.8Z M803 885.7 L807 889.7 L803 893.7Z M976.5 885.7 L972.5 889.7 L976.5 893.7Z M803 915.6 L807 919.6 L803 923.6Z M976.5 915.6 L972.5 919.6 L976.5 923.6Z M803 945.5 L807 949.5 L803 953.5Z M976.5 945.5 L972.5 949.5 L976.5 953.5Z M803 975.4 L807 979.4 L803 983.4Z M976.5 975.4 L972.5 979.4 L976.5 983.4Z " fill="#0000f0"/><path d="M784.5 651.5 H984 M784.5 651.5 V998.5 H984" stroke="#000" stroke-width="1.3" fill="none"/><path d="M784.5 652.5 H984" stroke="#000" stroke-width="1" fill="none"/><path d="M784.5 900 H984" stroke="#000" stroke-width="2.2" fill="none"/><rect x="886.5" y="656.5" width="110" height="55" fill="#ffffd2" stroke="#000" stroke-width="1.6"/><rect x="888" y="661" width="13" height="10" fill="#c0c0c0"/><rect x="888" y="679" width="13" height="10" fill="#f00000"/><rect x="888" y="697" width="13" height="10" fill="#1f9a35"/><text x="906.5" y="671" font-size="13">Pixel (1,1)</text><text x="906.5" y="689" font-size="13">Calculated IRF</text><text x="906.5" y="707" font-size="13">Overall Decay</text><g clip-path="url(#yl)"><text x="758.5" y="893.0" font-size="15">10<tspan font-size="11" dy="-5">0</tspan></text><text x="758.5" y="846.5" font-size="15">10<tspan font-size="11" dy="-5">1</tspan></text><text x="758.5" y="800.0" font-size="15">10<tspan font-size="11" dy="-5">2</tspan></text><text x="758.5" y="753.5" font-size="15">10<tspan font-size="11" dy="-5">3</tspan></text><text x="758.5" y="707.0" font-size="15">10<tspan font-size="11" dy="-5">4</tspan></text><text x="758.5" y="660.5" font-size="15">10<tspan font-size="11" dy="-5">5</tspan></text></g><text x="782" y="915.8" font-size="15.5" text-anchor="end">0,4</text><text x="782" y="954.7" font-size="15.5" text-anchor="end">0,0</text><text x="782" y="993.6" font-size="15.5" text-anchor="end">-0,4</text><text x="802.5" y="1014" font-size="15.5" text-anchor="middle">0</text><text x="872.5" y="1014" font-size="15.5" text-anchor="middle">10</text><text x="942.3" y="1014" font-size="15.5" text-anchor="middle">20</text><text transform="translate(744.5 781) rotate(-90)" font-size="15" text-anchor="middle">Intensity [ Cnts]</text><g clip-path="url(#rl)"><text transform="translate(744.5 952.5) rotate(-90)" font-size="15" text-anchor="middle">Resids. [StdDev.]</text></g><text x="863.3" y="644.5" font-size="16.5" font-weight="bold" text-anchor="middle">Fit</text></svg>
<div style="left:984px;top:620px;width:21px;height:392px;background:#d0dbd0;"></div>
<div style="left:984px;top:620px;width:19px;height:19px;border:1px solid #808080;background:#e2e9e1"></div>
<div style="left:990px;top:627.5px;width:0;height:0;border-left:4px solid transparent;border-right:4px solid transparent;border-bottom:4px solid #000"></div>
<div style="left:984px;top:641px;width:19px;height:315px;border:1px solid #808080;background:#e2e9e1"></div>
<div style="left:984px;top:991px;width:19px;height:19px;border:1px solid #808080;background:#e2e9e1"></div>
<div style="left:990px;top:999.0px;width:0;height:0;border-left:4px solid transparent;border-right:4px solid transparent;border-top:4px solid #000"></div>
<div style="left:721px;top:1013px;width:263px;height:10px;background:#d0dbd0;"></div>
<div style="left:722px;top:1013px;width:18px;height:12px;border:1px solid #808080;background:#e2e9e1"></div>
<div style="left:728.0px;top:1018px;width:0;height:0;border-top:4px solid transparent;border-bottom:4px solid transparent;border-right:4px solid #000"></div>
<div style="left:741px;top:1013px;width:205px;height:12px;border:1px solid #808080;background:#e2e9e1"></div>
<div style="left:963px;top:1013px;width:19px;height:12px;border:1px solid #808080;background:#e2e9e1"></div>
<div style="left:971.0px;top:1018px;width:0;height:0;border-top:4px solid transparent;border-bottom:4px solid transparent;border-left:4px solid #000"></div>
<div style="left:6px;top:1023px;width:1908px;height:2px;background:#7a7a7a;"></div>
<div style="left:1px;top:1025px;width:1918px;height:4px;background:#d0dbd0;"></div>
<div style="left:1004px;top:620px;width:1px;height:404px;background:#808080;"></div>
<svg style="left:1013.5px;top:628.7px" width="14" height="14"><circle cx="7" cy="7" r="6" fill="#fff" stroke="#707070" stroke-width="1"/></svg>
<div class="t" style="top:627.94px;font-size:13px;color:#000;left:1032px;">Lin. Intens. Axis</div>
<svg style="left:1013.5px;top:659.5px" width="14" height="14"><circle cx="7" cy="7" r="6" fill="#21a03d" stroke="#707070" stroke-width="1"/><circle cx="7" cy="7" r="2.5" fill="#000"/></svg>
<div class="t" style="top:658.74px;font-size:13px;color:#000;left:1032px;">Log. Intens. Axis</div>
<div style="left:1014px;top:719px;width:12px;height:12px;border:1px solid #6a6a6a;background:#fff"></div>
<div class="t" style="top:718.24px;font-size:13px;color:#000;left:1032px;">Normalize Decays</div>
<svg style="left:1013.5px;top:752.2px" width="14" height="14"><circle cx="7" cy="7" r="6" fill="#21a03d" stroke="#707070" stroke-width="1"/><circle cx="7" cy="7" r="2.5" fill="#000"/></svg>
<div class="t" style="top:751.44px;font-size:13px;color:#000;left:1032px;">Show all Datasets</div>
<svg style="left:1013.5px;top:783.3px" width="14" height="14"><circle cx="7" cy="7" r="6" fill="#fff" stroke="#707070" stroke-width="1"/></svg>
<div class="t" style="top:782.53px;font-size:13px;color:#000;left:1032px;">Show Active Dataset</div>
<svg style="left:1013.5px;top:814.4px" width="14" height="14"><circle cx="7" cy="7" r="6" fill="#fff" stroke="#707070" stroke-width="1"/></svg>
<div class="t" style="top:813.63px;font-size:13px;color:#000;left:1032px;">TCSPC Curves Only</div>
<svg style="left:1013.5px;top:845.6px" width="14" height="14"><circle cx="7" cy="7" r="6" fill="#fff" stroke="#707070" stroke-width="1"/></svg>
<div class="t" style="top:844.84px;font-size:13px;color:#000;left:1032px;">Parameter Plot</div>
<svg style="left:1013.5px;top:876.3px" width="14" height="14"><circle cx="7" cy="7" r="6" fill="#fff" stroke="#707070" stroke-width="1"/></svg>
<div class="t" style="top:875.53px;font-size:13px;color:#000;left:1032px;">Error Correlation Plot</div>
</body></html>
